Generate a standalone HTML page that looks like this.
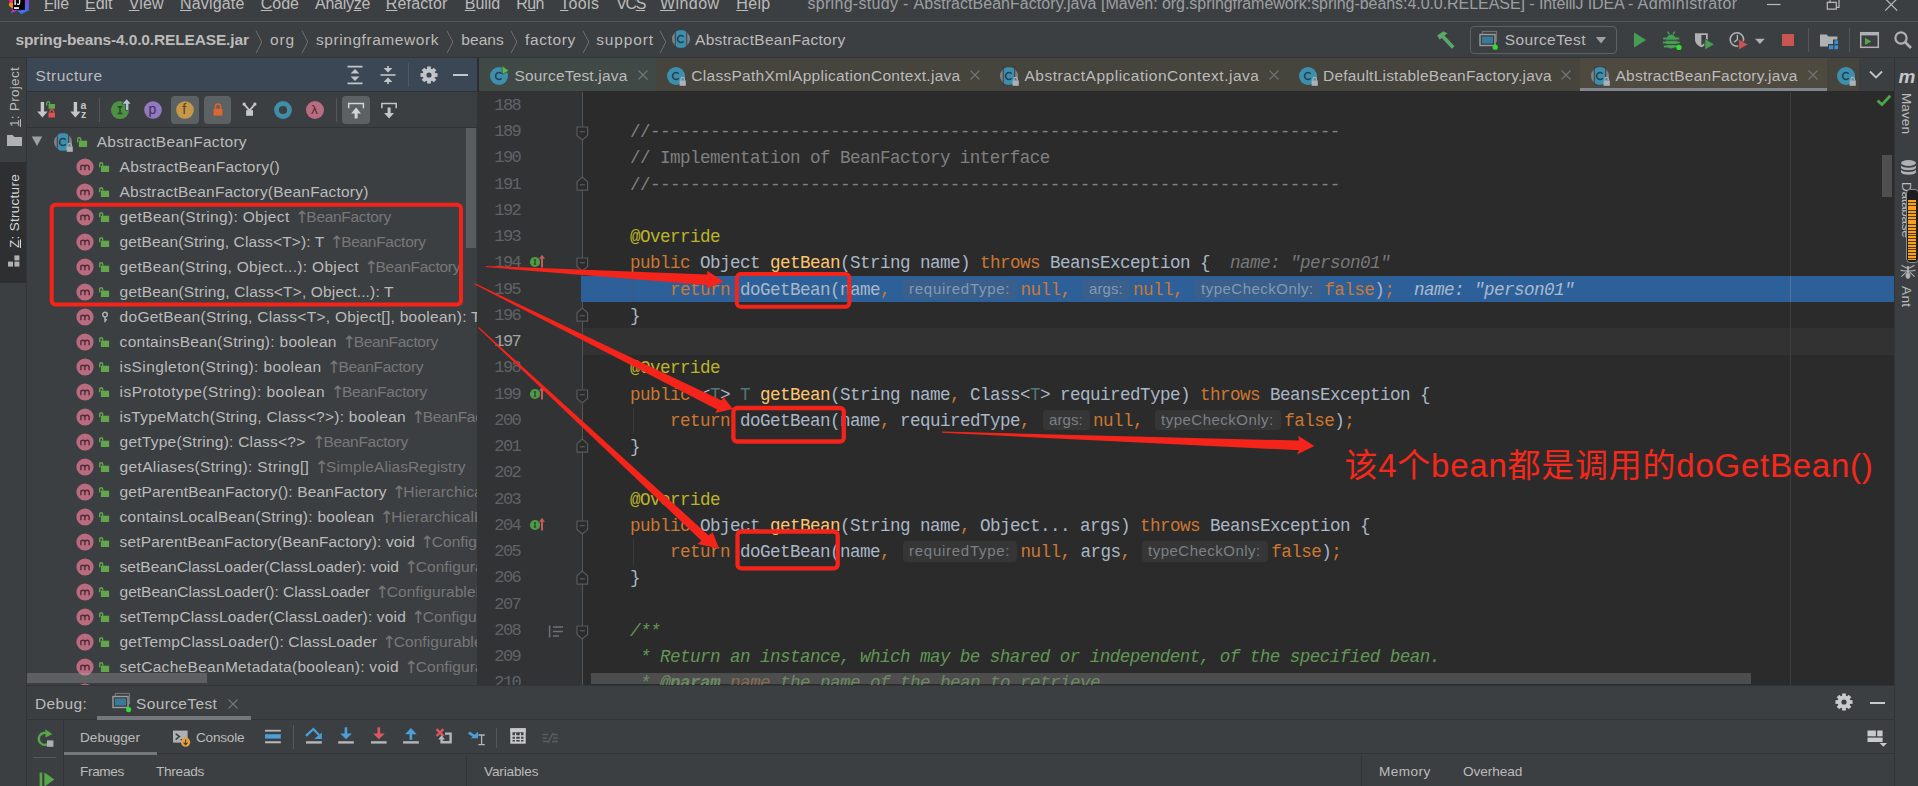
<!DOCTYPE html>
<html lang="zh"><head><meta charset="utf-8"><title>IntelliJ IDEA - AbstractBeanFactory.java</title>
<style>
html,body{margin:0;padding:0}
body{width:1918px;height:786px;overflow:hidden;background:#3c3f41;position:relative;font-family:"Liberation Sans","Noto Sans CJK SC",sans-serif;}
body div,body span,body svg{position:absolute;display:block}
span{white-space:pre}
svg{overflow:visible}
u{text-decoration:underline}
.ar{position:relative!important;top:1.4px;display:inline!important;font-family:"DejaVu Sans",sans-serif;font-size:17px;letter-spacing:-2.6px;line-height:10px}
.m{font-family:"Liberation Mono",monospace}
</style></head>
<body>
<div style="left:0px;top:21px;width:1918px;height:1px;background:#515658;"></div>
<svg style="left:8px;top:0px;" width="22" height="15" viewBox="0 0 22 15"><defs><linearGradient id="lgb" x1="0" y1="0" x2="0" y2="1"><stop offset="0" stop-color="#8546d8"/><stop offset="1" stop-color="#2f7cf0"/></linearGradient></defs><path d="M1.2 0 H5.2 V2.8 H1.6Z" fill="#fb2d7b"/><path d="M1.4 2.8 H5.2 V8.2 L3.6 8 L0.8 5.6Z" fill="#fb8617"/><path d="M4.6 8 L5.2 9.6 L9.6 10.6 L2.8 13.2Z" fill="#b436c9"/><path d="M16.6 0 H21 L20.8 10.4 L13.4 14 L9 10.8 L16.8 9.8Z" fill="url(#lgb)"/><rect x="5" y="0" width="11.8" height="9.8" fill="#000"/><rect x="6" y="7.2" width="4.9" height="1.7" fill="#fff"/><path d="M7.1 0 V4.6 M6.2 4.1 H8 M11.6 0 V3 C11.6 4.8 9.6 4.8 9.2 3.6" stroke="#fff" stroke-width="1.3" fill="none"/></svg>
<span id="t1" style="left:44px;top:-7.64px;font-size:16px;line-height:24px;color:#bbbbbb;letter-spacing:-0.249px;text-underline-offset:0.6px;text-decoration-thickness:1px;"><u>F</u>ile</span>
<span id="t2" style="left:85px;top:-7.64px;font-size:16px;line-height:24px;color:#bbbbbb;letter-spacing:-0.020px;text-underline-offset:0.6px;text-decoration-thickness:1px;"><u>E</u>dit</span>
<span id="t3" style="left:128.8px;top:-7.64px;font-size:16px;line-height:24px;color:#bbbbbb;letter-spacing:0.148px;text-underline-offset:0.6px;text-decoration-thickness:1px;"><u>V</u>iew</span>
<span id="t4" style="left:180px;top:-7.64px;font-size:16px;line-height:24px;color:#bbbbbb;letter-spacing:0.168px;text-underline-offset:0.6px;text-decoration-thickness:1px;"><u>N</u>avigate</span>
<span id="t5" style="left:260.8px;top:-7.64px;font-size:16px;line-height:24px;color:#bbbbbb;letter-spacing:-0.016px;text-underline-offset:0.6px;text-decoration-thickness:1px;"><u>C</u>ode</span>
<span id="t6" style="left:315px;top:-7.64px;font-size:16px;line-height:24px;color:#bbbbbb;letter-spacing:-0.277px;text-underline-offset:0.6px;text-decoration-thickness:1px;">Analy<u>z</u>e</span>
<span id="t7" style="left:385.8px;top:-7.64px;font-size:16px;line-height:24px;color:#bbbbbb;letter-spacing:0.152px;text-underline-offset:0.6px;text-decoration-thickness:1px;"><u>R</u>efactor</span>
<span id="t8" style="left:464.8px;top:-7.64px;font-size:16px;line-height:24px;color:#bbbbbb;letter-spacing:-0.076px;text-underline-offset:0.6px;text-decoration-thickness:1px;"><u>B</u>uild</span>
<span id="t9" style="left:516.3px;top:-7.64px;font-size:16px;line-height:24px;color:#bbbbbb;letter-spacing:-0.625px;text-underline-offset:0.6px;text-decoration-thickness:1px;">R<u>u</u>n</span>
<span id="t10" style="left:560px;top:-7.64px;font-size:16px;line-height:24px;color:#bbbbbb;letter-spacing:0.388px;text-underline-offset:0.6px;text-decoration-thickness:1px;"><u>T</u>ools</span>
<span id="t11" style="left:616.3px;top:-7.64px;font-size:16px;line-height:24px;color:#bbbbbb;letter-spacing:-1.402px;text-underline-offset:0.6px;text-decoration-thickness:1px;">VC<u>S</u></span>
<span id="t12" style="left:660px;top:-7.64px;font-size:16px;line-height:24px;color:#bbbbbb;letter-spacing:0.430px;text-underline-offset:0.6px;text-decoration-thickness:1px;"><u>W</u>indow</span>
<span id="t13" style="left:736.3px;top:-7.64px;font-size:16px;line-height:24px;color:#bbbbbb;letter-spacing:0.320px;text-underline-offset:0.6px;text-decoration-thickness:1px;"><u>H</u>elp</span>
<span id="t14" style="left:807.4px;top:-7.74px;font-size:16px;line-height:24px;color:#9c9fa1;letter-spacing:0.315px;">spring-study - </span>
<span id="t15" style="left:913.5px;top:-7.74px;font-size:16px;line-height:24px;color:#9c9fa1;letter-spacing:0.042px;">AbstractBeanFactory.java </span>
<span id="t16" style="left:1101px;top:-7.74px;font-size:16px;line-height:24px;color:#9c9fa1;letter-spacing:-0.045px;">[Maven: </span>
<span id="t17" style="left:1162px;top:-7.74px;font-size:16px;line-height:24px;color:#9c9fa1;letter-spacing:-0.055px;">org.springframework:spring-beans:4.0.0.RELEASE] - </span>
<span id="t18" style="left:1539px;top:-7.74px;font-size:16px;line-height:24px;color:#9c9fa1;letter-spacing:-0.118px;">IntelliJ IDEA - </span>
<span id="t19" style="left:1637.6px;top:-7.74px;font-size:16px;line-height:24px;color:#9c9fa1;letter-spacing:0.442px;">Administrator</span>
<svg style="left:1764px;top:0px;" width="140" height="14" viewBox="0 0 140 14"><path d="M3 4.5 H16.5" stroke="#b8babc" stroke-width="1.2"/><path d="M63.3 2.4 H72.3 V9.2 H63.3Z M66 2.4 V-2 H75 V7.4 H72.3" stroke="#b8babc" stroke-width="1.2" fill="none"/><path d="M121.2 -1.4 L133.2 10.6 M133.2 -1.4 L121.2 10.6" stroke="#b8babc" stroke-width="1.2" fill="none"/></svg>
<div style="left:0px;top:57px;width:1918px;height:1px;background:#323537;"></div>
<span id="t20" style="left:15.5px;top:27.73px;font-size:15.5px;line-height:23px;color:#bbbbbb;font-weight:bold;letter-spacing:-0.148px;">spring-beans-4.0.0.RELEASE.jar</span>
<svg style="left:254.5px;top:29.5px;" width="8" height="24" viewBox="0 0 8 24"><path d="M1 0.8 L6.8 12 L1 23.2" fill="none" stroke="#6d7073" stroke-width="1"/></svg>
<span id="t21" style="left:270px;top:27.73px;font-size:15.5px;line-height:23px;color:#bbbbbb;letter-spacing:0.865px;">org</span>
<svg style="left:300.5px;top:29.5px;" width="8" height="24" viewBox="0 0 8 24"><path d="M1 0.8 L6.8 12 L1 23.2" fill="none" stroke="#6d7073" stroke-width="1"/></svg>
<span id="t22" style="left:316px;top:27.73px;font-size:15.5px;line-height:23px;color:#bbbbbb;letter-spacing:0.562px;">springframework</span>
<svg style="left:445.5px;top:29.5px;" width="8" height="24" viewBox="0 0 8 24"><path d="M1 0.8 L6.8 12 L1 23.2" fill="none" stroke="#6d7073" stroke-width="1"/></svg>
<span id="t23" style="left:461.3px;top:27.73px;font-size:15.5px;line-height:23px;color:#bbbbbb;letter-spacing:0.053px;">beans</span>
<svg style="left:509.5px;top:29.5px;" width="8" height="24" viewBox="0 0 8 24"><path d="M1 0.8 L6.8 12 L1 23.2" fill="none" stroke="#6d7073" stroke-width="1"/></svg>
<span id="t24" style="left:525px;top:27.73px;font-size:15.5px;line-height:23px;color:#bbbbbb;letter-spacing:0.612px;">factory</span>
<svg style="left:581.5px;top:29.5px;" width="8" height="24" viewBox="0 0 8 24"><path d="M1 0.8 L6.8 12 L1 23.2" fill="none" stroke="#6d7073" stroke-width="1"/></svg>
<span id="t25" style="left:596.3px;top:27.73px;font-size:15.5px;line-height:23px;color:#bbbbbb;letter-spacing:0.828px;">support</span>
<svg style="left:658.5px;top:29.5px;" width="8" height="24" viewBox="0 0 8 24"><path d="M1 0.8 L6.8 12 L1 23.2" fill="none" stroke="#6d7073" stroke-width="1"/></svg>
<svg style="left:669px;top:27.4px;" width="24" height="24" viewBox="0 0 24 24"><circle cx="12" cy="12" r="9" fill="#879199" opacity="0.85"/><rect x="5.7" y="2.5" width="12.6" height="19" fill="#3c3f41" opacity="0.8"/><path d="M7 4.6 C8.7 2.7 15.3 2.7 17 4.6 V19.4 C15.3 21.3 8.7 21.3 7 19.4Z" fill="#3e8fae"/><path d="M14.7 9.7 A3.5 3.5 0 1 0 14.7 14.3" fill="none" stroke="#22414f" stroke-width="1.6"/></svg>
<span id="t26" style="left:695px;top:27.73px;font-size:15.5px;line-height:23px;color:#bbbbbb;letter-spacing:0.303px;">AbstractBeanFactory</span>
<svg style="left:1434px;top:29px;" width="24" height="22" viewBox="0 0 24 22"><path d="M3.2 6.6 L9.4 2.2 L13.6 4.6 L10.4 6.4 L20.6 17.2 L17.8 19.8 L7.8 9 L5.6 10.6Z" fill="#59a869"/></svg>
<div style="left:1470px;top:26px;width:145px;height:26px;border:1px solid #5e6163;border-radius:4px;box-sizing:content-box"></div>
<svg style="left:1478px;top:30px;" width="22" height="20" viewBox="0 0 22 20"><rect x="4.5" y="1.5" width="14" height="10" fill="none" stroke="#6e7275" stroke-width="1.2"/><rect x="2" y="4.5" width="15" height="11" fill="#3c3f41" stroke="#9a9da0" stroke-width="1.4"/><rect x="4" y="6.5" width="11" height="7" fill="#3a7a99"/><circle cx="17.2" cy="17.2" r="2.6" fill="#2de02d"/></svg>
<span id="t27" style="left:1504.8px;top:28.43px;font-size:15.5px;line-height:23px;color:#bbbbbb;letter-spacing:0.345px;">SourceTest</span>
<svg style="left:1595px;top:36px;" width="12" height="8" viewBox="0 0 12 8"><path d="M0.8 1 H11.2 L6 7.4Z" fill="#9da0a2"/></svg>
<svg style="left:1632px;top:32px;" width="16" height="17" viewBox="0 0 16 17"><path d="M2 0.6 L14.2 8 L2 15.4Z" fill="#499c54"/></svg>
<svg style="left:1661px;top:30px;" width="22" height="20" viewBox="0 0 22 20"><ellipse cx="10.2" cy="11.6" rx="5.5" ry="7" fill="#499c54"/><path d="M6.6 1.6 L8.4 4.4 M13.8 1.6 L12 4.4" stroke="#499c54" stroke-width="1.5" fill="none"/><path d="M2.2 8.4 H18.2 M1.8 12.4 H18.6 M2.8 16.6 H17.6" stroke="#499c54" stroke-width="2" fill="none"/><path d="M5 10.3 H15.4 M5 14.5 H15.4" stroke="#3c3f41" stroke-width="1.1"/><circle cx="18" cy="17.4" r="2.6" fill="#2de02d"/></svg>
<svg style="left:1693px;top:30px;" width="23" height="20" viewBox="0 0 23 20"><path d="M2 3.2 H14.8 V9.6 C14.8 13.6 11.4 16.2 8.4 17.2 C5.4 16.2 2 13.6 2 9.6Z" fill="#afb1b3"/><path d="M8.4 5 H13 V9.6 C13 12.4 10.6 14.4 8.4 15.3Z" fill="#3c3f41"/><path d="M11.8 8.6 L21.6 14.3 L11.8 20Z" fill="#499c54" stroke="#3c3f41" stroke-width="0.9"/></svg>
<svg style="left:1728px;top:30px;" width="38" height="20" viewBox="0 0 38 20"><circle cx="8.9" cy="9.5" r="6.7" fill="none" stroke="#afb1b3" stroke-width="1.6"/><path d="M9.4 4.8 V9.6 L6 12.2" stroke="#afb1b3" stroke-width="1.4" fill="none"/><path d="M10.6 9 L20.4 14.5 L10.6 20Z" fill="#c95452" stroke="#3c3f41" stroke-width="0.9"/><path d="M27 8.8 H36.8 L31.9 14Z" fill="#afb1b3"/></svg>
<div style="left:1781.9px;top:34.1px;width:12.2px;height:12.3px;background:#c95452;"></div>
<div style="left:1808px;top:28px;width:1px;height:24px;background:#555759;"></div>
<svg style="left:1818px;top:29px;" width="22" height="22" viewBox="0 0 22 22"><path d="M2 5.4 H8.6 L10.6 7.6 H19.4 V10.4 H15 V15 H10 V17.4 H2Z" fill="#afb1b3"/><rect x="16.4" y="11.4" width="3.7" height="3.7" fill="#3a8fd0"/><rect x="11" y="16.3" width="4.2" height="3.9" fill="#3a8fd0"/><rect x="16.4" y="16.3" width="3.7" height="3.9" fill="#3a8fd0"/></svg>
<div style="left:1849px;top:28px;width:1px;height:24px;background:#555759;"></div>
<svg style="left:1859px;top:30px;" width="22" height="20" viewBox="0 0 22 20"><rect x="1.7" y="2.7" width="17.6" height="14.6" fill="none" stroke="#afb1b3" stroke-width="1.5"/><rect x="1" y="2" width="19" height="3.4" fill="#afb1b3"/><path d="M6 7.8 L12.4 11.4 L6 15Z" fill="#57a64a"/></svg>
<svg style="left:1893px;top:30px;" width="20" height="20" viewBox="0 0 20 20"><circle cx="8" cy="8" r="5.6" fill="none" stroke="#afb1b3" stroke-width="2.2"/><path d="M12 12 L18 18" stroke="#afb1b3" stroke-width="2.6"/></svg>
<div style="left:26px;top:58px;width:1px;height:728px;background:#323537;"></div>
<div style="left:0px;top:162px;width:26px;height:121px;background:#2d2f31;"></div>
<span id="t28" style="left:5px;top:127px;transform-origin:0 0;transform:rotate(-90deg);font-size:13.5px;line-height:20px;color:#bbbbbb;letter-spacing:0.295px;"><u>1</u>: Project</span>
<svg style="left:6px;top:134px;" width="17" height="13" viewBox="0 0 17 13"><path d="M1 1 H6.6 L8.4 3 H16 V12 H1Z" fill="#afb1b3"/></svg>
<span id="t29" style="left:5px;top:248px;transform-origin:0 0;transform:rotate(-90deg);font-size:13.5px;line-height:20px;color:#d5d7d9;letter-spacing:0.289px;"><u>Z</u>: Structure</span>
<svg style="left:7px;top:254px;" width="15" height="13" viewBox="0 0 15 13"><rect x="1" y="7.6" width="5" height="5" fill="#afb1b3"/><rect x="7.4" y="7.6" width="5" height="5" fill="#afb1b3"/><rect x="7.4" y="1.4" width="5" height="5" fill="#afb1b3"/></svg>
<div style="left:27px;top:58px;width:450px;height:34px;background:#3b4754;"></div>
<span id="t30" style="left:35.5px;top:64.13px;font-size:15.5px;line-height:23px;color:#bbbbbb;letter-spacing:0.457px;">Structure</span>
<svg style="left:346px;top:65px;" width="18" height="20" viewBox="0 0 18 20"><path d="M1.5 1.6 H16.5 M1.5 18.4 H16.5" stroke="#c3c6c8" stroke-width="1.6"/><path d="M9 4 L13.4 8.4 H4.6Z M9 16 L13.4 11.6 H4.6Z" fill="#c3c6c8"/></svg>
<svg style="left:379px;top:65px;" width="18" height="20" viewBox="0 0 18 20"><path d="M1.5 10 H16.5" stroke="#c3c6c8" stroke-width="1.6"/><path d="M9 7.6 L13.4 3 H4.6Z M9 12.4 L13.4 17 H4.6Z" fill="#c3c6c8"/><path d="M9 1 V4 M9 16 V19" stroke="#c3c6c8" stroke-width="1.6"/></svg>
<div style="left:408px;top:63px;width:1px;height:24px;background:#4d5966;"></div>
<svg style="left:418.5px;top:64.5px;" width="20" height="20" viewBox="0 0 20 20"><g transform="translate(10,10)"><rect x="-1.9" y="-8.5" width="3.8" height="4" fill="#c3c6c8" transform="rotate(0)"/><rect x="-1.9" y="-8.5" width="3.8" height="4" fill="#c3c6c8" transform="rotate(45)"/><rect x="-1.9" y="-8.5" width="3.8" height="4" fill="#c3c6c8" transform="rotate(90)"/><rect x="-1.9" y="-8.5" width="3.8" height="4" fill="#c3c6c8" transform="rotate(135)"/><rect x="-1.9" y="-8.5" width="3.8" height="4" fill="#c3c6c8" transform="rotate(180)"/><rect x="-1.9" y="-8.5" width="3.8" height="4" fill="#c3c6c8" transform="rotate(225)"/><rect x="-1.9" y="-8.5" width="3.8" height="4" fill="#c3c6c8" transform="rotate(270)"/><rect x="-1.9" y="-8.5" width="3.8" height="4" fill="#c3c6c8" transform="rotate(315)"/><circle r="4.5" fill="none" stroke="#c3c6c8" stroke-width="3.8"/></g></svg>
<div style="left:453px;top:74px;width:15px;height:2px;background:#c3c6c8;"></div>
<div style="left:27px;top:91px;width:450px;height:1px;background:#2f3234;"></div>
<div style="left:27px;top:127px;width:450px;height:1px;background:#2f3234;"></div>
<svg style="left:36px;top:100px;" width="21" height="20" viewBox="0 0 21 20"><path d="M4.7 2 H8.1 V11.6 H11.6 L6.4 17.5 L1.2 11.6 H4.7Z" fill="#c4c6c8"/><rect x="12.5" y="4" width="6.5" height="4.7" fill="#5fa84a"/><path d="M10.7 5.4 V3.2 A1.5 1.5 0 0 1 13.7 3.2 V4" stroke="#5fa84a" stroke-width="1.3" fill="none"/><rect x="12.5" y="12.6" width="6.5" height="4.9" fill="#e0504f"/><path d="M14 12.6 V11.4 A1.75 1.75 0 0 1 17.5 11.4 V12.6" stroke="#e0504f" stroke-width="1.3" fill="none"/></svg>
<svg style="left:69px;top:100px;" width="20" height="20" viewBox="0 0 20 20"><path d="M4.7 2 H8.1 V11.6 H11.6 L6.4 17.5 L1.2 11.6 H4.7Z" fill="#c4c6c8"/></svg>
<span id="t31" style="left:80.6px;top:96.66px;font-size:10.5px;line-height:16px;color:#c4c6c8;font-weight:bold;">a</span>
<span id="t32" style="left:80.9px;top:105.86px;font-size:10.5px;line-height:16px;color:#c4c6c8;font-weight:bold;">z</span>
<div style="left:99px;top:98px;width:1px;height:24px;background:#555759;"></div>
<svg style="left:109px;top:99px;" width="23" height="22" viewBox="0 0 23 22"><circle cx="11" cy="11" r="9.1" fill="#4e9046"/><path d="M8.6 7.8 H13.4 M8.6 14.4 H13.4 M11 7.8 V14.4" stroke="#234a20" stroke-width="1.5" fill="none"/><path d="M15.9 4.7 H17 V11 H19.4 V4.7 H21.6 L17.6 0.2 L13.6 4.7Z" fill="#b4c6d4" stroke="#3c3f41" stroke-width="1.2" paint-order="stroke"/></svg>
<svg style="left:143px;top:100px;" width="20" height="20" viewBox="0 0 20 20"><circle cx="10" cy="10" r="8.8" fill="#9479c0"/></svg>
<span id="t33" style="left:148.6px;top:99.15px;font-size:14px;line-height:21px;color:#3f2f5a;">p</span>
<div style="left:170.7px;top:96px;width:28px;height:27.5px;background:#5c6164;border-radius:4px"></div>
<svg style="left:174.5px;top:100px;" width="20" height="20" viewBox="0 0 20 20"><circle cx="10" cy="10" r="8.8" fill="#c6984a"/></svg>
<span id="t34" style="left:182.3px;top:98.85px;font-size:14px;line-height:21px;color:#5a4216;">f</span>
<div style="left:203.7px;top:96px;width:27.5px;height:27.5px;background:#5c6164;border-radius:4px"></div>
<svg style="left:211px;top:102px;" width="14" height="15" viewBox="0 0 14 15"><rect x="2.6" y="6.6" width="8.8" height="7" fill="#e0662f"/><path d="M4.4 6.6 V4.6 A2.6 2.6 0 0 1 9.6 4.6 V6.6" stroke="#e0662f" stroke-width="1.5" fill="none"/></svg>
<svg style="left:240px;top:100px;" width="20" height="20" viewBox="0 0 20 20"><path d="M4.1 4.1 L9.5 10.6 L14.9 4.1" stroke="#c4c6c8" stroke-width="1.9" fill="none"/><rect x="2.7" y="2.7" width="2.8" height="2.8" fill="#c4c6c8"/><rect x="13.5" y="2.7" width="2.8" height="2.8" fill="#c4c6c8"/><rect x="6.1" y="10.2" width="6.9" height="5.6" fill="#c4c6c8"/></svg>
<svg style="left:273px;top:100px;" width="20" height="20" viewBox="0 0 20 20"><circle cx="10" cy="10" r="6.5" fill="none" stroke="#3e8faa" stroke-width="4.8"/></svg>
<svg style="left:304.8px;top:100px;" width="20" height="20" viewBox="0 0 20 20"><circle cx="10" cy="10" r="9" fill="#b86d80"/></svg>
<span id="t35" style="left:311px;top:99.92px;font-size:13.5px;line-height:20px;color:#4d2a35;">λ</span>
<div style="left:335.5px;top:98px;width:1px;height:24px;background:#555759;"></div>
<div style="left:342.1px;top:95.8px;width:27.9px;height:28px;background:#5c6164;border-radius:4px"></div>
<svg style="left:346px;top:100px;" width="20" height="20" viewBox="0 0 20 20"><path d="M2.7 8.3 V3.4 H17.4 V8.3" stroke="#d2d4d6" stroke-width="1.5" fill="none"/><path d="M10.1 7.6 L15 13.5 H11.6 V18.6 H8.6 V13.5 H5.1Z" fill="#d2d4d6"/></svg>
<svg style="left:379px;top:100px;" width="20" height="20" viewBox="0 0 20 20"><path d="M2.9 8.3 V3.4 H17.2 V8.3" stroke="#c4c6c8" stroke-width="1.5" fill="none"/><path d="M10.1 18.6 L15 12.9 H11.6 V7.6 H8.6 V12.9 H5.1Z" fill="#c4c6c8"/></svg>
<div style="left:27px;top:128px;width:450px;height:557px;overflow:hidden">
<svg style="left:4px;top:7px;" width="12" height="12" viewBox="0 0 12 12"><path d="M0.8 1.4 H11.2 L6 11Z" fill="#9da0a2"/></svg>
<svg style="left:23.9px;top:2px;" width="24" height="24" viewBox="0 0 24 24"><circle cx="12" cy="12" r="9" fill="#879199" opacity="0.85"/><rect x="5.7" y="2.5" width="12.6" height="19" fill="#3c3f41" opacity="0.8"/><path d="M7 4.6 C8.7 2.7 15.3 2.7 17 4.6 V19.4 C15.3 21.3 8.7 21.3 7 19.4Z" fill="#3e8fae"/><path d="M14.7 9.7 A3.5 3.5 0 1 0 14.7 14.3" fill="none" stroke="#22414f" stroke-width="1.6"/><rect x="15.6" y="16.4" width="6.2" height="5.4" fill="#aab3ba"/><path d="M17 16.4 V15 A1.7 1.7 0 0 1 20.4 15 V16.4" fill="none" stroke="#aab3ba" stroke-width="1.2"/></svg>
<svg style="left:49px;top:7px;" width="14" height="14" viewBox="0 0 14 14"><rect x="2.9" y="5.7" width="8.2" height="6.3" fill="#62a54b"/><path d="M1.7 7.3 V4.2 A1.5 1.5 0 0 1 4.7 4.2 V5.8" fill="none" stroke="#62a54b" stroke-width="1.4"/></svg>
<span id="t36" style="left:69.7px;top:2.13px;font-size:15.5px;line-height:23px;color:#bbbbbb;letter-spacing:0.288px;">AbstractBeanFactory</span>
<svg style="left:47.8px;top:28.900000000000006px;" width="20" height="20" viewBox="0 0 20 20"><circle cx="10" cy="10" r="8.6" fill="#b96c80"/><path d="M5.9 13.3 V8.2 M5.9 9.6 C6.4 7.8 9.6 7.6 9.9 9.8 V13.3 M9.9 9.8 C10.4 7.7 13.9 7.6 14.1 9.9 V13.3" fill="none" stroke="#4d2a35" stroke-width="1.35"/></svg>
<svg style="left:71.2px;top:31.900000000000006px;" width="14" height="14" viewBox="0 0 14 14"><rect x="2.9" y="5.7" width="8.2" height="6.3" fill="#62a54b"/><path d="M1.7 7.3 V4.2 A1.5 1.5 0 0 1 4.7 4.2 V5.8" fill="none" stroke="#62a54b" stroke-width="1.4"/></svg>
<span id="t37" style="left:92.6px;top:27.03px;font-size:15.5px;line-height:23px;color:#bbbbbb;letter-spacing:0.254px;">AbstractBeanFactory()</span>
<svg style="left:47.8px;top:53.900000000000006px;" width="20" height="20" viewBox="0 0 20 20"><circle cx="10" cy="10" r="8.6" fill="#b96c80"/><path d="M5.9 13.3 V8.2 M5.9 9.6 C6.4 7.8 9.6 7.6 9.9 9.8 V13.3 M9.9 9.8 C10.4 7.7 13.9 7.6 14.1 9.9 V13.3" fill="none" stroke="#4d2a35" stroke-width="1.35"/></svg>
<svg style="left:71.2px;top:56.900000000000006px;" width="14" height="14" viewBox="0 0 14 14"><rect x="2.9" y="5.7" width="8.2" height="6.3" fill="#62a54b"/><path d="M1.7 7.3 V4.2 A1.5 1.5 0 0 1 4.7 4.2 V5.8" fill="none" stroke="#62a54b" stroke-width="1.4"/></svg>
<span id="t38" style="left:92.6px;top:52.03px;font-size:15.5px;line-height:23px;color:#bbbbbb;letter-spacing:0.186px;">AbstractBeanFactory(BeanFactory)</span>
<svg style="left:47.8px;top:78.9px;" width="20" height="20" viewBox="0 0 20 20"><circle cx="10" cy="10" r="8.6" fill="#b96c80"/><path d="M5.9 13.3 V8.2 M5.9 9.6 C6.4 7.8 9.6 7.6 9.9 9.8 V13.3 M9.9 9.8 C10.4 7.7 13.9 7.6 14.1 9.9 V13.3" fill="none" stroke="#4d2a35" stroke-width="1.35"/></svg>
<svg style="left:71.2px;top:81.9px;" width="14" height="14" viewBox="0 0 14 14"><rect x="2.9" y="5.7" width="8.2" height="6.3" fill="#62a54b"/><path d="M1.7 7.3 V4.2 A1.5 1.5 0 0 1 4.7 4.2 V5.8" fill="none" stroke="#62a54b" stroke-width="1.4"/></svg>
<span id="t39" style="left:92.6px;top:77.03px;font-size:15.5px;line-height:23px;color:#bbbbbb;letter-spacing:0.349px;">getBean(String): Object</span>
<span id="t40" style="left:267.7px;top:77.03px;font-size:15.5px;line-height:23px;color:#787878;letter-spacing:-0.304px;"><span class="ar">↑</span>BeanFactory</span>
<svg style="left:47.8px;top:103.9px;" width="20" height="20" viewBox="0 0 20 20"><circle cx="10" cy="10" r="8.6" fill="#b96c80"/><path d="M5.9 13.3 V8.2 M5.9 9.6 C6.4 7.8 9.6 7.6 9.9 9.8 V13.3 M9.9 9.8 C10.4 7.7 13.9 7.6 14.1 9.9 V13.3" fill="none" stroke="#4d2a35" stroke-width="1.35"/></svg>
<svg style="left:71.2px;top:106.9px;" width="14" height="14" viewBox="0 0 14 14"><rect x="2.9" y="5.7" width="8.2" height="6.3" fill="#62a54b"/><path d="M1.7 7.3 V4.2 A1.5 1.5 0 0 1 4.7 4.2 V5.8" fill="none" stroke="#62a54b" stroke-width="1.4"/></svg>
<span id="t41" style="left:92.6px;top:102.03px;font-size:15.5px;line-height:23px;color:#bbbbbb;letter-spacing:0.125px;">getBean(String, Class&lt;T&gt;): T</span>
<span id="t42" style="left:302.5px;top:102.03px;font-size:15.5px;line-height:23px;color:#787878;letter-spacing:-0.296px;"><span class="ar">↑</span>BeanFactory</span>
<svg style="left:47.8px;top:128.89999999999998px;" width="20" height="20" viewBox="0 0 20 20"><circle cx="10" cy="10" r="8.6" fill="#b96c80"/><path d="M5.9 13.3 V8.2 M5.9 9.6 C6.4 7.8 9.6 7.6 9.9 9.8 V13.3 M9.9 9.8 C10.4 7.7 13.9 7.6 14.1 9.9 V13.3" fill="none" stroke="#4d2a35" stroke-width="1.35"/></svg>
<svg style="left:71.2px;top:131.89999999999998px;" width="14" height="14" viewBox="0 0 14 14"><rect x="2.9" y="5.7" width="8.2" height="6.3" fill="#62a54b"/><path d="M1.7 7.3 V4.2 A1.5 1.5 0 0 1 4.7 4.2 V5.8" fill="none" stroke="#62a54b" stroke-width="1.4"/></svg>
<span id="t43" style="left:92.6px;top:127.03px;font-size:15.5px;line-height:23px;color:#bbbbbb;letter-spacing:0.320px;">getBean(String, Object...): Object</span>
<span id="t44" style="left:336.9px;top:127.03px;font-size:15.5px;line-height:23px;color:#787878;letter-spacing:-0.304px;"><span class="ar">↑</span>BeanFactory</span>
<svg style="left:47.8px;top:153.89999999999998px;" width="20" height="20" viewBox="0 0 20 20"><circle cx="10" cy="10" r="8.6" fill="#b96c80"/><path d="M5.9 13.3 V8.2 M5.9 9.6 C6.4 7.8 9.6 7.6 9.9 9.8 V13.3 M9.9 9.8 C10.4 7.7 13.9 7.6 14.1 9.9 V13.3" fill="none" stroke="#4d2a35" stroke-width="1.35"/></svg>
<svg style="left:71.2px;top:156.89999999999998px;" width="14" height="14" viewBox="0 0 14 14"><rect x="2.9" y="5.7" width="8.2" height="6.3" fill="#62a54b"/><path d="M1.7 7.3 V4.2 A1.5 1.5 0 0 1 4.7 4.2 V5.8" fill="none" stroke="#62a54b" stroke-width="1.4"/></svg>
<span id="t45" style="left:92.6px;top:152.03px;font-size:15.5px;line-height:23px;color:#bbbbbb;letter-spacing:0.166px;">getBean(String, Class&lt;T&gt;, Object...): T</span>
<svg style="left:47.8px;top:178.89999999999998px;" width="20" height="20" viewBox="0 0 20 20"><circle cx="10" cy="10" r="8.6" fill="#b96c80"/><path d="M5.9 13.3 V8.2 M5.9 9.6 C6.4 7.8 9.6 7.6 9.9 9.8 V13.3 M9.9 9.8 C10.4 7.7 13.9 7.6 14.1 9.9 V13.3" fill="none" stroke="#4d2a35" stroke-width="1.35"/></svg>
<svg style="left:70.5px;top:181.89999999999998px;" width="14" height="14" viewBox="0 0 14 14"><circle cx="7" cy="4.6" r="2.3" fill="none" stroke="#afb1b3" stroke-width="1.5"/><path d="M7 6.9 V12.2 M7 9.8 H9 " fill="none" stroke="#afb1b3" stroke-width="1.5"/></svg>
<span id="t46" style="left:92.6px;top:177.03px;font-size:15.5px;line-height:23px;color:#bbbbbb;letter-spacing:0.274px;">doGetBean(String, Class&lt;T&gt;, Object[], boolean): T</span>
<svg style="left:47.8px;top:203.89999999999998px;" width="20" height="20" viewBox="0 0 20 20"><circle cx="10" cy="10" r="8.6" fill="#b96c80"/><path d="M5.9 13.3 V8.2 M5.9 9.6 C6.4 7.8 9.6 7.6 9.9 9.8 V13.3 M9.9 9.8 C10.4 7.7 13.9 7.6 14.1 9.9 V13.3" fill="none" stroke="#4d2a35" stroke-width="1.35"/></svg>
<svg style="left:71.2px;top:206.89999999999998px;" width="14" height="14" viewBox="0 0 14 14"><rect x="2.9" y="5.7" width="8.2" height="6.3" fill="#62a54b"/><path d="M1.7 7.3 V4.2 A1.5 1.5 0 0 1 4.7 4.2 V5.8" fill="none" stroke="#62a54b" stroke-width="1.4"/></svg>
<span id="t47" style="left:92.6px;top:202.03px;font-size:15.5px;line-height:23px;color:#bbbbbb;letter-spacing:0.299px;">containsBean(String): boolean</span>
<span id="t48" style="left:315px;top:202.03px;font-size:15.5px;line-height:23px;color:#787878;letter-spacing:-0.329px;"><span class="ar">↑</span>BeanFactory</span>
<svg style="left:47.8px;top:228.89999999999998px;" width="20" height="20" viewBox="0 0 20 20"><circle cx="10" cy="10" r="8.6" fill="#b96c80"/><path d="M5.9 13.3 V8.2 M5.9 9.6 C6.4 7.8 9.6 7.6 9.9 9.8 V13.3 M9.9 9.8 C10.4 7.7 13.9 7.6 14.1 9.9 V13.3" fill="none" stroke="#4d2a35" stroke-width="1.35"/></svg>
<svg style="left:71.2px;top:231.89999999999998px;" width="14" height="14" viewBox="0 0 14 14"><rect x="2.9" y="5.7" width="8.2" height="6.3" fill="#62a54b"/><path d="M1.7 7.3 V4.2 A1.5 1.5 0 0 1 4.7 4.2 V5.8" fill="none" stroke="#62a54b" stroke-width="1.4"/></svg>
<span id="t49" style="left:92.6px;top:227.03px;font-size:15.5px;line-height:23px;color:#bbbbbb;letter-spacing:0.410px;">isSingleton(String): boolean</span>
<span id="t50" style="left:299.8px;top:227.03px;font-size:15.5px;line-height:23px;color:#787878;letter-spacing:-0.279px;"><span class="ar">↑</span>BeanFactory</span>
<svg style="left:47.8px;top:253.89999999999998px;" width="20" height="20" viewBox="0 0 20 20"><circle cx="10" cy="10" r="8.6" fill="#b96c80"/><path d="M5.9 13.3 V8.2 M5.9 9.6 C6.4 7.8 9.6 7.6 9.9 9.8 V13.3 M9.9 9.8 C10.4 7.7 13.9 7.6 14.1 9.9 V13.3" fill="none" stroke="#4d2a35" stroke-width="1.35"/></svg>
<svg style="left:71.2px;top:256.9px;" width="14" height="14" viewBox="0 0 14 14"><rect x="2.9" y="5.7" width="8.2" height="6.3" fill="#62a54b"/><path d="M1.7 7.3 V4.2 A1.5 1.5 0 0 1 4.7 4.2 V5.8" fill="none" stroke="#62a54b" stroke-width="1.4"/></svg>
<span id="t51" style="left:92.6px;top:252.03px;font-size:15.5px;line-height:23px;color:#bbbbbb;letter-spacing:0.474px;">isPrototype(String): boolean</span>
<span id="t52" style="left:303.4px;top:252.03px;font-size:15.5px;line-height:23px;color:#787878;letter-spacing:-0.279px;"><span class="ar">↑</span>BeanFactory</span>
<svg style="left:47.8px;top:278.9px;" width="20" height="20" viewBox="0 0 20 20"><circle cx="10" cy="10" r="8.6" fill="#b96c80"/><path d="M5.9 13.3 V8.2 M5.9 9.6 C6.4 7.8 9.6 7.6 9.9 9.8 V13.3 M9.9 9.8 C10.4 7.7 13.9 7.6 14.1 9.9 V13.3" fill="none" stroke="#4d2a35" stroke-width="1.35"/></svg>
<svg style="left:71.2px;top:281.9px;" width="14" height="14" viewBox="0 0 14 14"><rect x="2.9" y="5.7" width="8.2" height="6.3" fill="#62a54b"/><path d="M1.7 7.3 V4.2 A1.5 1.5 0 0 1 4.7 4.2 V5.8" fill="none" stroke="#62a54b" stroke-width="1.4"/></svg>
<span id="t53" style="left:92.6px;top:277.03px;font-size:15.5px;line-height:23px;color:#bbbbbb;letter-spacing:0.281px;">isTypeMatch(String, Class&lt;?&gt;): boolean</span>
<span id="t54" style="left:384px;top:277.03px;font-size:15.5px;line-height:23px;color:#787878;letter-spacing:-0.296px;"><span class="ar">↑</span>BeanFactory</span>
<svg style="left:47.8px;top:303.9px;" width="20" height="20" viewBox="0 0 20 20"><circle cx="10" cy="10" r="8.6" fill="#b96c80"/><path d="M5.9 13.3 V8.2 M5.9 9.6 C6.4 7.8 9.6 7.6 9.9 9.8 V13.3 M9.9 9.8 C10.4 7.7 13.9 7.6 14.1 9.9 V13.3" fill="none" stroke="#4d2a35" stroke-width="1.35"/></svg>
<svg style="left:71.2px;top:306.9px;" width="14" height="14" viewBox="0 0 14 14"><rect x="2.9" y="5.7" width="8.2" height="6.3" fill="#62a54b"/><path d="M1.7 7.3 V4.2 A1.5 1.5 0 0 1 4.7 4.2 V5.8" fill="none" stroke="#62a54b" stroke-width="1.4"/></svg>
<span id="t55" style="left:92.6px;top:302.03px;font-size:15.5px;line-height:23px;color:#bbbbbb;letter-spacing:0.234px;">getType(String): Class&lt;?&gt;</span>
<span id="t56" style="left:284.8px;top:302.03px;font-size:15.5px;line-height:23px;color:#787878;letter-spacing:-0.304px;"><span class="ar">↑</span>BeanFactory</span>
<svg style="left:47.8px;top:328.9px;" width="20" height="20" viewBox="0 0 20 20"><circle cx="10" cy="10" r="8.6" fill="#b96c80"/><path d="M5.9 13.3 V8.2 M5.9 9.6 C6.4 7.8 9.6 7.6 9.9 9.8 V13.3 M9.9 9.8 C10.4 7.7 13.9 7.6 14.1 9.9 V13.3" fill="none" stroke="#4d2a35" stroke-width="1.35"/></svg>
<svg style="left:71.2px;top:331.9px;" width="14" height="14" viewBox="0 0 14 14"><rect x="2.9" y="5.7" width="8.2" height="6.3" fill="#62a54b"/><path d="M1.7 7.3 V4.2 A1.5 1.5 0 0 1 4.7 4.2 V5.8" fill="none" stroke="#62a54b" stroke-width="1.4"/></svg>
<span id="t57" style="left:92.6px;top:327.03px;font-size:15.5px;line-height:23px;color:#bbbbbb;letter-spacing:0.341px;">getAliases(String): String[]</span>
<span id="t58" style="left:287.4px;top:327.03px;font-size:15.5px;line-height:23px;color:#787878;letter-spacing:0.091px;"><span class="ar">↑</span>SimpleAliasRegistry</span>
<svg style="left:47.8px;top:353.9px;" width="20" height="20" viewBox="0 0 20 20"><circle cx="10" cy="10" r="8.6" fill="#b96c80"/><path d="M5.9 13.3 V8.2 M5.9 9.6 C6.4 7.8 9.6 7.6 9.9 9.8 V13.3 M9.9 9.8 C10.4 7.7 13.9 7.6 14.1 9.9 V13.3" fill="none" stroke="#4d2a35" stroke-width="1.35"/></svg>
<svg style="left:71.2px;top:356.9px;" width="14" height="14" viewBox="0 0 14 14"><rect x="2.9" y="5.7" width="8.2" height="6.3" fill="#62a54b"/><path d="M1.7 7.3 V4.2 A1.5 1.5 0 0 1 4.7 4.2 V5.8" fill="none" stroke="#62a54b" stroke-width="1.4"/></svg>
<span id="t59" style="left:92.6px;top:352.03px;font-size:15.5px;line-height:23px;color:#bbbbbb;letter-spacing:0.148px;">getParentBeanFactory(): BeanFactory</span>
<span id="t60" style="left:364.7px;top:352.03px;font-size:15.5px;line-height:23px;color:#787878;letter-spacing:0.088px;"><span class="ar">↑</span>HierarchicalBeanFactory</span>
<svg style="left:47.8px;top:378.9px;" width="20" height="20" viewBox="0 0 20 20"><circle cx="10" cy="10" r="8.6" fill="#b96c80"/><path d="M5.9 13.3 V8.2 M5.9 9.6 C6.4 7.8 9.6 7.6 9.9 9.8 V13.3 M9.9 9.8 C10.4 7.7 13.9 7.6 14.1 9.9 V13.3" fill="none" stroke="#4d2a35" stroke-width="1.35"/></svg>
<svg style="left:71.2px;top:381.9px;" width="14" height="14" viewBox="0 0 14 14"><rect x="2.9" y="5.7" width="8.2" height="6.3" fill="#62a54b"/><path d="M1.7 7.3 V4.2 A1.5 1.5 0 0 1 4.7 4.2 V5.8" fill="none" stroke="#62a54b" stroke-width="1.4"/></svg>
<span id="t61" style="left:92.6px;top:377.03px;font-size:15.5px;line-height:23px;color:#bbbbbb;letter-spacing:0.274px;">containsLocalBean(String): boolean</span>
<span id="t62" style="left:352.5px;top:377.03px;font-size:15.5px;line-height:23px;color:#787878;letter-spacing:0.088px;"><span class="ar">↑</span>HierarchicalBeanFactory</span>
<svg style="left:47.8px;top:403.9px;" width="20" height="20" viewBox="0 0 20 20"><circle cx="10" cy="10" r="8.6" fill="#b96c80"/><path d="M5.9 13.3 V8.2 M5.9 9.6 C6.4 7.8 9.6 7.6 9.9 9.8 V13.3 M9.9 9.8 C10.4 7.7 13.9 7.6 14.1 9.9 V13.3" fill="none" stroke="#4d2a35" stroke-width="1.35"/></svg>
<svg style="left:71.2px;top:406.9px;" width="14" height="14" viewBox="0 0 14 14"><rect x="2.9" y="5.7" width="8.2" height="6.3" fill="#62a54b"/><path d="M1.7 7.3 V4.2 A1.5 1.5 0 0 1 4.7 4.2 V5.8" fill="none" stroke="#62a54b" stroke-width="1.4"/></svg>
<span id="t63" style="left:92.6px;top:402.03px;font-size:15.5px;line-height:23px;color:#bbbbbb;letter-spacing:0.152px;">setParentBeanFactory(BeanFactory): void</span>
<span id="t64" style="left:393px;top:402.03px;font-size:15.5px;line-height:23px;color:#787878;letter-spacing:0.088px;"><span class="ar">↑</span>ConfigurableBeanFactory</span>
<svg style="left:47.8px;top:428.9px;" width="20" height="20" viewBox="0 0 20 20"><circle cx="10" cy="10" r="8.6" fill="#b96c80"/><path d="M5.9 13.3 V8.2 M5.9 9.6 C6.4 7.8 9.6 7.6 9.9 9.8 V13.3 M9.9 9.8 C10.4 7.7 13.9 7.6 14.1 9.9 V13.3" fill="none" stroke="#4d2a35" stroke-width="1.35"/></svg>
<svg style="left:71.2px;top:431.9px;" width="14" height="14" viewBox="0 0 14 14"><rect x="2.9" y="5.7" width="8.2" height="6.3" fill="#62a54b"/><path d="M1.7 7.3 V4.2 A1.5 1.5 0 0 1 4.7 4.2 V5.8" fill="none" stroke="#62a54b" stroke-width="1.4"/></svg>
<span id="t65" style="left:92.6px;top:427.03px;font-size:15.5px;line-height:23px;color:#bbbbbb;letter-spacing:0.030px;">setBeanClassLoader(ClassLoader): void</span>
<span id="t66" style="left:377px;top:427.03px;font-size:15.5px;line-height:23px;color:#787878;letter-spacing:0.088px;"><span class="ar">↑</span>ConfigurableBeanFactory</span>
<svg style="left:47.8px;top:453.9px;" width="20" height="20" viewBox="0 0 20 20"><circle cx="10" cy="10" r="8.6" fill="#b96c80"/><path d="M5.9 13.3 V8.2 M5.9 9.6 C6.4 7.8 9.6 7.6 9.9 9.8 V13.3 M9.9 9.8 C10.4 7.7 13.9 7.6 14.1 9.9 V13.3" fill="none" stroke="#4d2a35" stroke-width="1.35"/></svg>
<svg style="left:71.2px;top:456.9px;" width="14" height="14" viewBox="0 0 14 14"><rect x="2.9" y="5.7" width="8.2" height="6.3" fill="#62a54b"/><path d="M1.7 7.3 V4.2 A1.5 1.5 0 0 1 4.7 4.2 V5.8" fill="none" stroke="#62a54b" stroke-width="1.4"/></svg>
<span id="t67" style="left:92.6px;top:452.03px;font-size:15.5px;line-height:23px;color:#bbbbbb;letter-spacing:-0.010px;">getBeanClassLoader(): ClassLoader</span>
<span id="t68" style="left:348px;top:452.03px;font-size:15.5px;line-height:23px;color:#787878;letter-spacing:0.088px;"><span class="ar">↑</span>ConfigurableBeanFactory</span>
<svg style="left:47.8px;top:478.9px;" width="20" height="20" viewBox="0 0 20 20"><circle cx="10" cy="10" r="8.6" fill="#b96c80"/><path d="M5.9 13.3 V8.2 M5.9 9.6 C6.4 7.8 9.6 7.6 9.9 9.8 V13.3 M9.9 9.8 C10.4 7.7 13.9 7.6 14.1 9.9 V13.3" fill="none" stroke="#4d2a35" stroke-width="1.35"/></svg>
<svg style="left:71.2px;top:481.9px;" width="14" height="14" viewBox="0 0 14 14"><rect x="2.9" y="5.7" width="8.2" height="6.3" fill="#62a54b"/><path d="M1.7 7.3 V4.2 A1.5 1.5 0 0 1 4.7 4.2 V5.8" fill="none" stroke="#62a54b" stroke-width="1.4"/></svg>
<span id="t69" style="left:92.6px;top:477.03px;font-size:15.5px;line-height:23px;color:#bbbbbb;letter-spacing:0.173px;">setTempClassLoader(ClassLoader): void</span>
<span id="t70" style="left:384px;top:477.03px;font-size:15.5px;line-height:23px;color:#787878;letter-spacing:0.088px;"><span class="ar">↑</span>ConfigurableBeanFactory</span>
<svg style="left:47.8px;top:503.9px;" width="20" height="20" viewBox="0 0 20 20"><circle cx="10" cy="10" r="8.6" fill="#b96c80"/><path d="M5.9 13.3 V8.2 M5.9 9.6 C6.4 7.8 9.6 7.6 9.9 9.8 V13.3 M9.9 9.8 C10.4 7.7 13.9 7.6 14.1 9.9 V13.3" fill="none" stroke="#4d2a35" stroke-width="1.35"/></svg>
<svg style="left:71.2px;top:506.9px;" width="14" height="14" viewBox="0 0 14 14"><rect x="2.9" y="5.7" width="8.2" height="6.3" fill="#62a54b"/><path d="M1.7 7.3 V4.2 A1.5 1.5 0 0 1 4.7 4.2 V5.8" fill="none" stroke="#62a54b" stroke-width="1.4"/></svg>
<span id="t71" style="left:92.6px;top:502.03px;font-size:15.5px;line-height:23px;color:#bbbbbb;letter-spacing:0.150px;">getTempClassLoader(): ClassLoader</span>
<span id="t72" style="left:355px;top:502.03px;font-size:15.5px;line-height:23px;color:#787878;letter-spacing:0.088px;"><span class="ar">↑</span>ConfigurableBeanFactory</span>
<svg style="left:47.8px;top:528.9px;" width="20" height="20" viewBox="0 0 20 20"><circle cx="10" cy="10" r="8.6" fill="#b96c80"/><path d="M5.9 13.3 V8.2 M5.9 9.6 C6.4 7.8 9.6 7.6 9.9 9.8 V13.3 M9.9 9.8 C10.4 7.7 13.9 7.6 14.1 9.9 V13.3" fill="none" stroke="#4d2a35" stroke-width="1.35"/></svg>
<svg style="left:71.2px;top:531.9px;" width="14" height="14" viewBox="0 0 14 14"><rect x="2.9" y="5.7" width="8.2" height="6.3" fill="#62a54b"/><path d="M1.7 7.3 V4.2 A1.5 1.5 0 0 1 4.7 4.2 V5.8" fill="none" stroke="#62a54b" stroke-width="1.4"/></svg>
<span id="t73" style="left:92.6px;top:527.03px;font-size:15.5px;line-height:23px;color:#bbbbbb;letter-spacing:0.302px;">setCacheBeanMetadata(boolean): void</span>
<span id="t74" style="left:377px;top:527.03px;font-size:15.5px;line-height:23px;color:#787878;letter-spacing:0.088px;"><span class="ar">↑</span>ConfigurableBeanFactory</span>
<svg style="left:47.8px;top:553.9px;" width="20" height="20" viewBox="0 0 20 20"><circle cx="10" cy="10" r="8.6" fill="#b96c80"/><path d="M5.9 13.3 V8.2 M5.9 9.6 C6.4 7.8 9.6 7.6 9.9 9.8 V13.3 M9.9 9.8 C10.4 7.7 13.9 7.6 14.1 9.9 V13.3" fill="none" stroke="#4d2a35" stroke-width="1.35"/></svg>
<svg style="left:71.2px;top:556.9px;" width="14" height="14" viewBox="0 0 14 14"><rect x="2.9" y="5.7" width="8.2" height="6.3" fill="#62a54b"/><path d="M1.7 7.3 V4.2 A1.5 1.5 0 0 1 4.7 4.2 V5.8" fill="none" stroke="#62a54b" stroke-width="1.4"/></svg>
<span id="t75" style="left:92.6px;top:552.03px;font-size:15.5px;line-height:23px;color:#bbbbbb;letter-spacing:0.088px;">isCacheBeanMetadata(): boolean</span>
</div>
<div style="left:466px;top:128px;width:10px;height:120px;background:#5a5d5f;"></div>
<div style="left:27px;top:673px;width:180px;height:10px;background:rgba(190,190,190,0.26);"></div>
<div style="left:477px;top:58px;width:2px;height:34px;background:#2b2d2e;"></div>
<div style="left:477px;top:92px;width:2px;height:593px;background:#313335;"></div>
<div style="left:479px;top:58px;width:1415px;height:34px;background:#3c3f41;"></div>
<div style="left:479px;top:58px;width:177px;height:33px;background:#404946;"></div>
<div style="left:656px;top:58px;width:1203px;height:33px;background:#45443d;"></div>
<div style="left:1580px;top:58px;width:247px;height:33px;background:#4f4a3f;"></div>
<div style="left:1580px;top:88.4px;width:247px;height:3.4px;background:#82878e;"></div>
<svg style="left:486.8px;top:64px;" width="24" height="24" viewBox="0 0 24 24"><circle cx="12" cy="12" r="9.0" fill="#3e8fae"/><path d="M14.7 9.7 A3.5 3.5 0 1 0 14.7 14.3" fill="none" stroke="#22414f" stroke-width="1.6"/><path d="M14.9 1.8 L21.9 6.6 L15.5 10.4Z" fill="#5fb83f" stroke="#3e4946" stroke-width="0.7"/></svg>
<span id="t76" style="left:514.5px;top:64.13px;font-size:15.5px;line-height:23px;color:#bbbbbb;letter-spacing:0.181px;">SourceTest.java</span>
<svg style="left:637px;top:69px;" width="12" height="12" viewBox="0 0 12 12"><path d="M1.5 1.5 L10.5 10.5 M10.5 1.5 L1.5 10.5" stroke="#747779" stroke-width="1.1" fill="none"/></svg>
<svg style="left:663.5px;top:64px;" width="24" height="24" viewBox="0 0 24 24"><circle cx="12" cy="12" r="9.0" fill="#3e8fae"/><path d="M14.7 9.7 A3.5 3.5 0 1 0 14.7 14.3" fill="none" stroke="#22414f" stroke-width="1.6"/><rect x="15.6" y="16.4" width="6.2" height="5.4" fill="#aab3ba"/><path d="M17 16.4 V15 A1.7 1.7 0 0 1 20.4 15 V16.4" fill="none" stroke="#aab3ba" stroke-width="1.2"/></svg>
<span id="t77" style="left:691.3px;top:64.13px;font-size:15.5px;line-height:23px;color:#bbbbbb;letter-spacing:0.282px;">ClassPathXmlApplicationContext.java</span>
<svg style="left:969px;top:69px;" width="12" height="12" viewBox="0 0 12 12"><path d="M1.5 1.5 L10.5 10.5 M10.5 1.5 L1.5 10.5" stroke="#747779" stroke-width="1.1" fill="none"/></svg>
<svg style="left:996.8px;top:64px;" width="24" height="24" viewBox="0 0 24 24"><circle cx="12" cy="12" r="9" fill="#879199" opacity="0.85"/><rect x="5.7" y="2.5" width="12.6" height="19" fill="#3c3f41" opacity="0.8"/><path d="M7 4.6 C8.7 2.7 15.3 2.7 17 4.6 V19.4 C15.3 21.3 8.7 21.3 7 19.4Z" fill="#3e8fae"/><path d="M14.7 9.7 A3.5 3.5 0 1 0 14.7 14.3" fill="none" stroke="#22414f" stroke-width="1.6"/><rect x="15.6" y="16.4" width="6.2" height="5.4" fill="#aab3ba"/><path d="M17 16.4 V15 A1.7 1.7 0 0 1 20.4 15 V16.4" fill="none" stroke="#aab3ba" stroke-width="1.2"/></svg>
<span id="t78" style="left:1024.5px;top:64.13px;font-size:15.5px;line-height:23px;color:#bbbbbb;letter-spacing:0.521px;">AbstractApplicationContext.java</span>
<svg style="left:1267.8px;top:69px;" width="12" height="12" viewBox="0 0 12 12"><path d="M1.5 1.5 L10.5 10.5 M10.5 1.5 L1.5 10.5" stroke="#747779" stroke-width="1.1" fill="none"/></svg>
<svg style="left:1295.5px;top:64px;" width="24" height="24" viewBox="0 0 24 24"><circle cx="12" cy="12" r="9.0" fill="#3e8fae"/><path d="M14.7 9.7 A3.5 3.5 0 1 0 14.7 14.3" fill="none" stroke="#22414f" stroke-width="1.6"/><rect x="15.6" y="16.4" width="6.2" height="5.4" fill="#aab3ba"/><path d="M17 16.4 V15 A1.7 1.7 0 0 1 20.4 15 V16.4" fill="none" stroke="#aab3ba" stroke-width="1.2"/></svg>
<span id="t79" style="left:1323px;top:64.13px;font-size:15.5px;line-height:23px;color:#bbbbbb;letter-spacing:0.219px;">DefaultListableBeanFactory.java</span>
<svg style="left:1560px;top:69px;" width="12" height="12" viewBox="0 0 12 12"><path d="M1.5 1.5 L10.5 10.5 M10.5 1.5 L1.5 10.5" stroke="#747779" stroke-width="1.1" fill="none"/></svg>
<svg style="left:1588px;top:64px;" width="24" height="24" viewBox="0 0 24 24"><circle cx="12" cy="12" r="9" fill="#879199" opacity="0.85"/><rect x="5.7" y="2.5" width="12.6" height="19" fill="#3c3f41" opacity="0.8"/><path d="M7 4.6 C8.7 2.7 15.3 2.7 17 4.6 V19.4 C15.3 21.3 8.7 21.3 7 19.4Z" fill="#3e8fae"/><path d="M14.7 9.7 A3.5 3.5 0 1 0 14.7 14.3" fill="none" stroke="#22414f" stroke-width="1.6"/><rect x="15.6" y="16.4" width="6.2" height="5.4" fill="#aab3ba"/><path d="M17 16.4 V15 A1.7 1.7 0 0 1 20.4 15 V16.4" fill="none" stroke="#aab3ba" stroke-width="1.2"/></svg>
<span id="t80" style="left:1615.5px;top:64.13px;font-size:15.5px;line-height:23px;color:#bbbbbb;letter-spacing:0.236px;">AbstractBeanFactory.java</span>
<svg style="left:1806.5px;top:69px;" width="12" height="12" viewBox="0 0 12 12"><path d="M1.5 1.5 L10.5 10.5 M10.5 1.5 L1.5 10.5" stroke="#747779" stroke-width="1.1" fill="none"/></svg>
<svg style="left:1833.5px;top:64px;" width="24" height="24" viewBox="0 0 24 24"><circle cx="12" cy="12" r="9.0" fill="#3e8fae"/><path d="M14.7 9.7 A3.5 3.5 0 1 0 14.7 14.3" fill="none" stroke="#22414f" stroke-width="1.6"/><rect x="15.6" y="16.4" width="6.2" height="5.4" fill="#aab3ba"/><path d="M17 16.4 V15 A1.7 1.7 0 0 1 20.4 15 V16.4" fill="none" stroke="#aab3ba" stroke-width="1.2"/></svg>
<div style="left:1859px;top:58px;width:35px;height:33px;background:#3c3f41;"></div>
<svg style="left:1868px;top:69px;" width="16" height="12" viewBox="0 0 16 12"><path d="M2 2.5 L8 8.5 L14 2.5" fill="none" stroke="#c3c6c8" stroke-width="1.8"/></svg>
<div style="left:479px;top:91px;width:1415px;height:594px;background:#2b2b2b;"></div>
<div style="left:479px;top:91px;width:103px;height:594px;background:#313335;"></div>
<div style="left:582px;top:92px;width:1px;height:593px;background:#555555;"></div>
<div style="left:583px;top:328px;width:1311px;height:27px;background:#323232;"></div>
<div style="left:581px;top:276px;width:1313px;height:26px;background:#2d6099;"></div>
<div style="left:1790px;top:92px;width:1px;height:593px;background:#3e3e3e;"></div>
<div style="left:1790px;top:276px;width:1px;height:26px;background:#4a75a5;"></div>
<div style="left:633px;top:276px;width:1px;height:26px;background:#3f5878;"></div>
<div style="left:633px;top:407.6px;width:1px;height:26.25px;background:#393939;"></div>
<div style="left:633px;top:538.85px;width:1px;height:26.25px;background:#393939;"></div>
<span id="t81" class="m" style="left:494.3px;top:92.97px;font-size:17px;line-height:26px;color:#606366;letter-spacing:-1.602px;">188</span>
<span id="t82" class="m" style="left:494.3px;top:119.22px;font-size:17px;line-height:26px;color:#606366;letter-spacing:-1.602px;">189</span>
<span id="t83" class="m" style="left:494.3px;top:145.47px;font-size:17px;line-height:26px;color:#606366;letter-spacing:-1.602px;">190</span>
<span id="t84" class="m" style="left:494.3px;top:171.72px;font-size:17px;line-height:26px;color:#606366;letter-spacing:-1.602px;">191</span>
<span id="t85" class="m" style="left:494.3px;top:197.97px;font-size:17px;line-height:26px;color:#606366;letter-spacing:-1.602px;">192</span>
<span id="t86" class="m" style="left:494.3px;top:224.22px;font-size:17px;line-height:26px;color:#606366;letter-spacing:-1.602px;">193</span>
<span id="t87" class="m" style="left:494.3px;top:250.47px;font-size:17px;line-height:26px;color:#606366;letter-spacing:-1.602px;">194</span>
<span id="t88" class="m" style="left:494.3px;top:276.72px;font-size:17px;line-height:26px;color:#606366;letter-spacing:-1.602px;">195</span>
<span id="t89" class="m" style="left:494.3px;top:302.97px;font-size:17px;line-height:26px;color:#606366;letter-spacing:-1.602px;">196</span>
<span id="t90" class="m" style="left:494.3px;top:329.22px;font-size:17px;line-height:26px;color:#a4a3a3;letter-spacing:-1.602px;">197</span>
<span id="t91" class="m" style="left:494.3px;top:355.47px;font-size:17px;line-height:26px;color:#606366;letter-spacing:-1.602px;">198</span>
<span id="t92" class="m" style="left:494.3px;top:381.72px;font-size:17px;line-height:26px;color:#606366;letter-spacing:-1.602px;">199</span>
<span id="t93" class="m" style="left:494.3px;top:407.97px;font-size:17px;line-height:26px;color:#606366;letter-spacing:-1.602px;">200</span>
<span id="t94" class="m" style="left:494.3px;top:434.22px;font-size:17px;line-height:26px;color:#606366;letter-spacing:-1.602px;">201</span>
<span id="t95" class="m" style="left:494.3px;top:460.47px;font-size:17px;line-height:26px;color:#606366;letter-spacing:-1.602px;">202</span>
<span id="t96" class="m" style="left:494.3px;top:486.72px;font-size:17px;line-height:26px;color:#606366;letter-spacing:-1.602px;">203</span>
<span id="t97" class="m" style="left:494.3px;top:512.97px;font-size:17px;line-height:26px;color:#606366;letter-spacing:-1.602px;">204</span>
<span id="t98" class="m" style="left:494.3px;top:539.22px;font-size:17px;line-height:26px;color:#606366;letter-spacing:-1.602px;">205</span>
<span id="t99" class="m" style="left:494.3px;top:565.47px;font-size:17px;line-height:26px;color:#606366;letter-spacing:-1.602px;">206</span>
<span id="t100" class="m" style="left:494.3px;top:591.72px;font-size:17px;line-height:26px;color:#606366;letter-spacing:-1.602px;">207</span>
<span id="t101" class="m" style="left:494.3px;top:617.97px;font-size:17px;line-height:26px;color:#606366;letter-spacing:-1.602px;">208</span>
<span id="t102" class="m" style="left:494.3px;top:644.22px;font-size:17px;line-height:26px;color:#606366;letter-spacing:-1.602px;">209</span>
<span id="t103" class="m" style="left:494.3px;top:670.47px;font-size:17px;line-height:26px;color:#606366;letter-spacing:-1.602px;">210</span>
<svg style="left:576.1px;top:126.05000000000001px;" width="13" height="16" viewBox="0 0 13 16"><path d="M1 1 H11.6 V9.4 L6.3 14 L1 9.4 Z" fill="#2b2b2b" stroke="#585a5d" stroke-width="1.2"/><path d="M3.7 5.7 H8.9" stroke="#585a5d" stroke-width="1.2"/></svg>
<svg style="left:576.1px;top:175.85000000000002px;" width="13" height="16" viewBox="0 0 13 16"><path d="M1 14.2 H11.6 V5.8 L6.3 1 L1 5.8 Z" fill="#2b2b2b" stroke="#585a5d" stroke-width="1.2"/><path d="M3.7 8.8 H8.9" stroke="#585a5d" stroke-width="1.2"/></svg>
<svg style="left:576.1px;top:257.30000000000007px;" width="13" height="16" viewBox="0 0 13 16"><path d="M1 1 H11.6 V9.4 L6.3 14 L1 9.4 Z" fill="#2b2b2b" stroke="#585a5d" stroke-width="1.2"/><path d="M3.7 5.7 H8.9" stroke="#585a5d" stroke-width="1.2"/></svg>
<svg style="left:576.1px;top:307.1px;" width="13" height="16" viewBox="0 0 13 16"><path d="M1 14.2 H11.6 V5.8 L6.3 1 L1 5.8 Z" fill="#2b2b2b" stroke="#585a5d" stroke-width="1.2"/><path d="M3.7 8.8 H8.9" stroke="#585a5d" stroke-width="1.2"/></svg>
<svg style="left:576.1px;top:388.55000000000007px;" width="13" height="16" viewBox="0 0 13 16"><path d="M1 1 H11.6 V9.4 L6.3 14 L1 9.4 Z" fill="#2b2b2b" stroke="#585a5d" stroke-width="1.2"/><path d="M3.7 5.7 H8.9" stroke="#585a5d" stroke-width="1.2"/></svg>
<svg style="left:576.1px;top:438.35px;" width="13" height="16" viewBox="0 0 13 16"><path d="M1 14.2 H11.6 V5.8 L6.3 1 L1 5.8 Z" fill="#2b2b2b" stroke="#585a5d" stroke-width="1.2"/><path d="M3.7 8.8 H8.9" stroke="#585a5d" stroke-width="1.2"/></svg>
<svg style="left:576.1px;top:519.8000000000001px;" width="13" height="16" viewBox="0 0 13 16"><path d="M1 1 H11.6 V9.4 L6.3 14 L1 9.4 Z" fill="#2b2b2b" stroke="#585a5d" stroke-width="1.2"/><path d="M3.7 5.7 H8.9" stroke="#585a5d" stroke-width="1.2"/></svg>
<svg style="left:576.1px;top:569.6px;" width="13" height="16" viewBox="0 0 13 16"><path d="M1 14.2 H11.6 V5.8 L6.3 1 L1 5.8 Z" fill="#2b2b2b" stroke="#585a5d" stroke-width="1.2"/><path d="M3.7 8.8 H8.9" stroke="#585a5d" stroke-width="1.2"/></svg>
<svg style="left:576.1px;top:624.8000000000001px;" width="13" height="16" viewBox="0 0 13 16"><path d="M1 1 H11.6 V9.4 L6.3 14 L1 9.4 Z" fill="#2b2b2b" stroke="#585a5d" stroke-width="1.2"/><path d="M3.7 5.7 H8.9" stroke="#585a5d" stroke-width="1.2"/></svg>
<svg style="left:529px;top:254.3px;" width="18" height="16" viewBox="0 0 18 16"><circle cx="6" cy="8" r="5.1" fill="#4f9a46"/><path d="M4.9 5.9 H7.1 M4.9 10.1 H7.1 M6 5.9 V10.1" stroke="#234a20" stroke-width="1.2" fill="none"/><path d="M13 0.7 L16 4.7 H14 V13.4 H12 V4.7 H10Z" fill="#c75a5a"/></svg>
<svg style="left:529px;top:385.55px;" width="18" height="16" viewBox="0 0 18 16"><circle cx="6" cy="8" r="5.1" fill="#4f9a46"/><path d="M4.9 5.9 H7.1 M4.9 10.1 H7.1 M6 5.9 V10.1" stroke="#234a20" stroke-width="1.2" fill="none"/><path d="M13 0.7 L16 4.7 H14 V13.4 H12 V4.7 H10Z" fill="#c75a5a"/></svg>
<svg style="left:529px;top:516.8000000000001px;" width="18" height="16" viewBox="0 0 18 16"><circle cx="6" cy="8" r="5.1" fill="#4f9a46"/><path d="M4.9 5.9 H7.1 M4.9 10.1 H7.1 M6 5.9 V10.1" stroke="#234a20" stroke-width="1.2" fill="none"/><path d="M13 0.7 L16 4.7 H14 V13.4 H12 V4.7 H10Z" fill="#c75a5a"/></svg>
<svg style="left:548px;top:624.6px;" width="16" height="13" viewBox="0 0 16 13"><path d="M1.6 0.5 V12.5" stroke="#6e7174" stroke-width="1.5"/><path d="M5 2 H15 M5 6.5 H15 M5 11 H11" stroke="#6e7174" stroke-width="1.5"/></svg>
<span id="t104" class="m" style="left:630.0px;top:119.06px;font-size:17.6px;line-height:26px;color:#808080;letter-spacing:-0.562px;">//---------------------------------------------------------------------</span>
<span id="t105" class="m" style="left:630.0px;top:145.31px;font-size:17.6px;line-height:26px;color:#808080;letter-spacing:-0.562px;">// Implementation of BeanFactory interface</span>
<span id="t106" class="m" style="left:630.0px;top:171.56px;font-size:17.6px;line-height:26px;color:#808080;letter-spacing:-0.562px;">//---------------------------------------------------------------------</span>
<span id="t107" class="m" style="left:630.0px;top:224.06px;font-size:17.6px;line-height:26px;color:#bbb529;letter-spacing:-0.562px;">@Override</span>
<span id="t108" class="m" style="left:630.0px;top:355.31px;font-size:17.6px;line-height:26px;color:#bbb529;letter-spacing:-0.562px;">@Override</span>
<span id="t109" class="m" style="left:630.0px;top:486.56px;font-size:17.6px;line-height:26px;color:#bbb529;letter-spacing:-0.562px;">@Override</span>
<span id="t110" class="m" style="left:630.0px;top:250.31px;font-size:17.6px;line-height:26px;color:#cc7832;letter-spacing:-0.562px;">public </span>
<span id="t111" class="m" style="left:700.0px;top:250.31px;font-size:17.6px;line-height:26px;color:#a9b7c6;letter-spacing:-0.562px;">Object </span>
<span id="t112" class="m" style="left:770.0px;top:250.31px;font-size:17.6px;line-height:26px;color:#ffc66d;letter-spacing:-0.562px;">getBean</span>
<span id="t113" class="m" style="left:840.0px;top:250.31px;font-size:17.6px;line-height:26px;color:#a9b7c6;letter-spacing:-0.562px;">(String name) </span>
<span id="t114" class="m" style="left:980.0px;top:250.31px;font-size:17.6px;line-height:26px;color:#cc7832;letter-spacing:-0.562px;">throws </span>
<span id="t115" class="m" style="left:1050.0px;top:250.31px;font-size:17.6px;line-height:26px;color:#a9b7c6;letter-spacing:-0.562px;">BeansException {</span>
<span id="t116" class="m" style="left:1230.0px;top:250.31px;font-size:17.6px;line-height:26px;color:#787878;font-style:italic;letter-spacing:-0.562px;">name: "person01"</span>
<span id="t117" class="m" style="left:670.0px;top:276.56px;font-size:17.6px;line-height:26px;color:#cc7832;letter-spacing:-0.562px;">return </span>
<span id="t118" class="m" style="left:740.0px;top:276.56px;font-size:17.6px;line-height:26px;color:#a9b7c6;letter-spacing:-0.562px;">doGetBean(name</span>
<span id="t119" class="m" style="left:880.0px;top:276.56px;font-size:17.6px;line-height:26px;color:#cc7832;letter-spacing:-0.562px;">,</span>
<div style="left:902.5px;top:278.55px;width:114.5px;height:20.6px;background:#3a5f8b;border-radius:4px"></div>
<span id="t120" style="left:909.1px;top:277.65px;font-size:15px;line-height:22px;color:#8499b3;letter-spacing:0.720px;">requiredType:</span>
<span id="t121" class="m" style="left:1020.5px;top:276.56px;font-size:17.6px;line-height:26px;color:#cc7832;letter-spacing:-0.562px;">null,</span>
<div style="left:1082.5px;top:278.55px;width:47.0px;height:20.6px;background:#3a5f8b;border-radius:4px"></div>
<span id="t122" style="left:1089.1px;top:277.65px;font-size:15px;line-height:22px;color:#8499b3;letter-spacing:0.048px;">args:</span>
<span id="t123" class="m" style="left:1133px;top:276.56px;font-size:17.6px;line-height:26px;color:#cc7832;letter-spacing:-0.562px;">null,</span>
<div style="left:1194.5px;top:278.55px;width:126.0px;height:20.6px;background:#3a5f8b;border-radius:4px"></div>
<span id="t124" style="left:1201.1px;top:277.65px;font-size:15px;line-height:22px;color:#8499b3;letter-spacing:0.479px;">typeCheckOnly:</span>
<span id="t125" class="m" style="left:1324.3px;top:276.56px;font-size:17.6px;line-height:26px;color:#cc7832;letter-spacing:-0.562px;">false</span>
<span id="t126" class="m" style="left:1374.3px;top:276.56px;font-size:17.6px;line-height:26px;color:#a9b7c6;letter-spacing:-0.562px;">)</span>
<span id="t127" class="m" style="left:1384.3px;top:276.56px;font-size:17.6px;line-height:26px;color:#cc7832;letter-spacing:-0.562px;">;</span>
<span id="t128" class="m" style="left:1414px;top:276.56px;font-size:17.6px;line-height:26px;color:#a9b9cc;font-style:italic;letter-spacing:-0.562px;">name: "person01"</span>
<span id="t129" class="m" style="left:630.0px;top:302.81px;font-size:17.6px;line-height:26px;color:#a9b7c6;letter-spacing:-0.562px;">}</span>
<span id="t130" class="m" style="left:630.0px;top:381.56px;font-size:17.6px;line-height:26px;color:#cc7832;letter-spacing:-0.562px;">public </span>
<span id="t131" class="m" style="left:700.0px;top:381.56px;font-size:17.6px;line-height:26px;color:#a9b7c6;letter-spacing:-0.562px;">&lt;</span>
<span id="t132" class="m" style="left:710.0px;top:381.56px;font-size:17.6px;line-height:26px;color:#507874;letter-spacing:-0.562px;">T</span>
<span id="t133" class="m" style="left:720.0px;top:381.56px;font-size:17.6px;line-height:26px;color:#a9b7c6;letter-spacing:-0.562px;">&gt; </span>
<span id="t134" class="m" style="left:740.0px;top:381.56px;font-size:17.6px;line-height:26px;color:#507874;letter-spacing:-0.562px;">T </span>
<span id="t135" class="m" style="left:760.0px;top:381.56px;font-size:17.6px;line-height:26px;color:#ffc66d;letter-spacing:-0.562px;">getBean</span>
<span id="t136" class="m" style="left:830.0px;top:381.56px;font-size:17.6px;line-height:26px;color:#a9b7c6;letter-spacing:-0.562px;">(String name</span>
<span id="t137" class="m" style="left:950.0px;top:381.56px;font-size:17.6px;line-height:26px;color:#cc7832;letter-spacing:-0.562px;">, </span>
<span id="t138" class="m" style="left:970.0px;top:381.56px;font-size:17.6px;line-height:26px;color:#a9b7c6;letter-spacing:-0.562px;">Class&lt;</span>
<span id="t139" class="m" style="left:1030.0px;top:381.56px;font-size:17.6px;line-height:26px;color:#507874;letter-spacing:-0.562px;">T</span>
<span id="t140" class="m" style="left:1040.0px;top:381.56px;font-size:17.6px;line-height:26px;color:#a9b7c6;letter-spacing:-0.562px;">&gt; requiredType) </span>
<span id="t141" class="m" style="left:1200.0px;top:381.56px;font-size:17.6px;line-height:26px;color:#cc7832;letter-spacing:-0.562px;">throws </span>
<span id="t142" class="m" style="left:1270.0px;top:381.56px;font-size:17.6px;line-height:26px;color:#a9b7c6;letter-spacing:-0.562px;">BeansException {</span>
<span id="t143" class="m" style="left:670.0px;top:407.81px;font-size:17.6px;line-height:26px;color:#cc7832;letter-spacing:-0.562px;">return </span>
<span id="t144" class="m" style="left:740.0px;top:407.81px;font-size:17.6px;line-height:26px;color:#a9b7c6;letter-spacing:-0.562px;">doGetBean(name</span>
<span id="t145" class="m" style="left:880.0px;top:407.81px;font-size:17.6px;line-height:26px;color:#cc7832;letter-spacing:-0.562px;">, </span>
<span id="t146" class="m" style="left:900.0px;top:407.81px;font-size:17.6px;line-height:26px;color:#a9b7c6;letter-spacing:-0.562px;">requiredType</span>
<span id="t147" class="m" style="left:1020.0px;top:407.81px;font-size:17.6px;line-height:26px;color:#cc7832;letter-spacing:-0.562px;">,</span>
<div style="left:1042.5px;top:409.80px;width:47.0px;height:20.6px;background:#363636;border-radius:4px"></div>
<span id="t148" style="left:1049.1px;top:408.90px;font-size:15px;line-height:22px;color:#7b8085;letter-spacing:0.048px;">args:</span>
<span id="t149" class="m" style="left:1093px;top:407.81px;font-size:17.6px;line-height:26px;color:#cc7832;letter-spacing:-0.562px;">null,</span>
<div style="left:1154.5px;top:409.80px;width:126.0px;height:20.6px;background:#363636;border-radius:4px"></div>
<span id="t150" style="left:1161.1px;top:408.90px;font-size:15px;line-height:22px;color:#7b8085;letter-spacing:0.479px;">typeCheckOnly:</span>
<span id="t151" class="m" style="left:1284.3px;top:407.81px;font-size:17.6px;line-height:26px;color:#cc7832;letter-spacing:-0.562px;">false</span>
<span id="t152" class="m" style="left:1334.3px;top:407.81px;font-size:17.6px;line-height:26px;color:#a9b7c6;letter-spacing:-0.562px;">)</span>
<span id="t153" class="m" style="left:1344.3px;top:407.81px;font-size:17.6px;line-height:26px;color:#cc7832;letter-spacing:-0.562px;">;</span>
<span id="t154" class="m" style="left:630.0px;top:434.06px;font-size:17.6px;line-height:26px;color:#a9b7c6;letter-spacing:-0.562px;">}</span>
<span id="t155" class="m" style="left:630.0px;top:512.81px;font-size:17.6px;line-height:26px;color:#cc7832;letter-spacing:-0.562px;">public </span>
<span id="t156" class="m" style="left:700.0px;top:512.81px;font-size:17.6px;line-height:26px;color:#a9b7c6;letter-spacing:-0.562px;">Object </span>
<span id="t157" class="m" style="left:770.0px;top:512.81px;font-size:17.6px;line-height:26px;color:#ffc66d;letter-spacing:-0.562px;">getBean</span>
<span id="t158" class="m" style="left:840.0px;top:512.81px;font-size:17.6px;line-height:26px;color:#a9b7c6;letter-spacing:-0.562px;">(String name</span>
<span id="t159" class="m" style="left:960.0px;top:512.81px;font-size:17.6px;line-height:26px;color:#cc7832;letter-spacing:-0.562px;">, </span>
<span id="t160" class="m" style="left:980.0px;top:512.81px;font-size:17.6px;line-height:26px;color:#a9b7c6;letter-spacing:-0.562px;">Object... args) </span>
<span id="t161" class="m" style="left:1140.0px;top:512.81px;font-size:17.6px;line-height:26px;color:#cc7832;letter-spacing:-0.562px;">throws </span>
<span id="t162" class="m" style="left:1210.0px;top:512.81px;font-size:17.6px;line-height:26px;color:#a9b7c6;letter-spacing:-0.562px;">BeansException {</span>
<span id="t163" class="m" style="left:670.0px;top:539.06px;font-size:17.6px;line-height:26px;color:#cc7832;letter-spacing:-0.562px;">return </span>
<span id="t164" class="m" style="left:740.0px;top:539.06px;font-size:17.6px;line-height:26px;color:#a9b7c6;letter-spacing:-0.562px;">doGetBean(name</span>
<span id="t165" class="m" style="left:880.0px;top:539.06px;font-size:17.6px;line-height:26px;color:#cc7832;letter-spacing:-0.562px;">,</span>
<div style="left:902.5px;top:541.05px;width:114.5px;height:20.6px;background:#363636;border-radius:4px"></div>
<span id="t166" style="left:909.1px;top:540.15px;font-size:15px;line-height:22px;color:#7b8085;letter-spacing:0.720px;">requiredType:</span>
<span id="t167" class="m" style="left:1020.5px;top:539.06px;font-size:17.6px;line-height:26px;color:#cc7832;letter-spacing:-0.562px;">null</span>
<span id="t168" class="m" style="left:1060.5px;top:539.06px;font-size:17.6px;line-height:26px;color:#cc7832;letter-spacing:-0.562px;">, </span>
<span id="t169" class="m" style="left:1080.5px;top:539.06px;font-size:17.6px;line-height:26px;color:#a9b7c6;letter-spacing:-0.562px;">args</span>
<span id="t170" class="m" style="left:1120.5px;top:539.06px;font-size:17.6px;line-height:26px;color:#cc7832;letter-spacing:-0.562px;">,</span>
<div style="left:1141.5px;top:541.05px;width:126.0px;height:20.6px;background:#363636;border-radius:4px"></div>
<span id="t171" style="left:1148.1px;top:540.15px;font-size:15px;line-height:22px;color:#7b8085;letter-spacing:0.479px;">typeCheckOnly:</span>
<span id="t172" class="m" style="left:1271.3px;top:539.06px;font-size:17.6px;line-height:26px;color:#cc7832;letter-spacing:-0.562px;">false</span>
<span id="t173" class="m" style="left:1321.3px;top:539.06px;font-size:17.6px;line-height:26px;color:#a9b7c6;letter-spacing:-0.562px;">)</span>
<span id="t174" class="m" style="left:1331.3px;top:539.06px;font-size:17.6px;line-height:26px;color:#cc7832;letter-spacing:-0.562px;">;</span>
<span id="t175" class="m" style="left:630.0px;top:565.31px;font-size:17.6px;line-height:26px;color:#a9b7c6;letter-spacing:-0.562px;">}</span>
<span id="t176" class="m" style="left:630.0px;top:617.81px;font-size:17.6px;line-height:26px;color:#629755;font-style:italic;letter-spacing:-0.562px;">/**</span>
<span id="t177" class="m" style="left:630.0px;top:644.06px;font-size:17.6px;line-height:26px;color:#629755;font-style:italic;letter-spacing:-0.562px;"> * Return an instance, which may be shared or independent, of the specified bean.</span>
<span id="t178" class="m" style="left:630.0px;top:670.31px;font-size:17.6px;line-height:26px;color:#629755;font-style:italic;letter-spacing:-0.562px;"> * </span>
<span id="t179" class="m" style="left:660.0px;top:670.31px;font-size:17.6px;line-height:26px;color:#629755;font-weight:bold;font-style:italic;letter-spacing:-0.562px;">@param </span>
<span id="t180" class="m" style="left:730.0px;top:670.31px;font-size:17.6px;line-height:26px;color:#8a653b;font-style:italic;letter-spacing:-0.562px;">name </span>
<span id="t181" class="m" style="left:780.0px;top:670.31px;font-size:17.6px;line-height:26px;color:#629755;font-style:italic;letter-spacing:-0.562px;">the name of the bean to retrieve</span>
<div style="left:591px;top:673px;width:1160px;height:10.5px;background:rgba(120,120,120,0.45);"></div>
<div style="left:1882px;top:155px;width:10px;height:42px;background:rgba(128,128,128,0.42);"></div>
<svg style="left:1876px;top:94px;" width="16" height="13" viewBox="0 0 16 13"><path d="M1.6 6.6 L6 10.6 L14.2 1.8" fill="none" stroke="#4ea64a" stroke-width="2.8"/></svg>
<div style="left:1894px;top:58px;width:24px;height:728px;background:#3c3f41;"></div>
<div style="left:1893.5px;top:58px;width:1px;height:728px;background:#323537;"></div>
<span id="t182" style="left:1898.5px;top:63.42px;font-size:19px;line-height:28px;color:#c3c6c8;font-weight:bold;font-style:italic;">m</span>
<span id="t183" style="left:1916px;top:93px;transform-origin:0 0;transform:rotate(90deg);font-size:13.5px;line-height:20px;color:#bbbbbb;letter-spacing:0.094px;">Maven</span>
<svg style="left:1900px;top:159px;" width="17" height="17" viewBox="0 0 17 17"><ellipse cx="8.5" cy="4" rx="7.5" ry="2.9" fill="#afb1b3"/><path d="M1 6.4 C3 9.4 14 9.4 16 6.4 V9 C14 12 3 12 1 9Z M1 10.8 C3 13.8 14 13.8 16 10.8 V13.4 C14 16.4 3 16.4 1 13.4Z" fill="#afb1b3"/></svg>
<span id="t184" style="left:1916px;top:181.5px;transform-origin:0 0;transform:rotate(90deg);font-size:13.5px;line-height:20px;color:#bbbbbb;letter-spacing:-0.287px;">Database</span>
<div style="left:1906px;top:189px;width:12.5px;height:73.6px;border-radius:4px;background:#1d1e1f;border:1px solid #8c8f91;box-sizing:border-box"></div>
<div style="left:1908.4px;top:199.6px;width:7.6px;height:60px;background:repeating-linear-gradient(180deg,#f7a021 0,#f7a021 1.9px,#5a3a10 1.9px,#5a3a10 2.8px)"></div>
<svg style="left:1899px;top:264px;" width="18" height="16" viewBox="0 0 18 16"><path d="M9 2 C11 2 11.4 5 9 5.4 C6.6 5 7 2 9 2Z M9 5.4 C11.4 5.4 11.6 8.2 9 8.6 C6.4 8.2 6.6 5.4 9 5.4Z M9 8.6 C12.4 9 12.2 14.6 9 15 C5.8 14.6 5.6 9 9 8.6Z" fill="#afb1b3"/><path d="M7.4 4 L2.5 1.2 M10.6 4 L15.5 1.2 M7 7 L1.6 6.4 M11 7 L16.4 6.4 M7.2 8.2 L2.4 12.6 M10.8 8.2 L15.6 12.6" stroke="#afb1b3" stroke-width="1.1" fill="none"/></svg>
<span id="t185" style="left:1916px;top:286px;transform-origin:0 0;transform:rotate(90deg);font-size:13.5px;line-height:20px;color:#bbbbbb;letter-spacing:0.411px;">Ant</span>
<div style="left:27px;top:685px;width:1867px;height:101px;background:#3c3f41;"></div>
<div style="left:27px;top:685px;width:1867px;height:1px;background:#323537;"></div>
<div style="left:27px;top:719px;width:1867px;height:1px;background:#323537;"></div>
<span id="t186" style="left:35px;top:692.13px;font-size:15.5px;line-height:23px;color:#bbbbbb;letter-spacing:0.386px;">Debug:</span>
<svg style="left:111px;top:692px;" width="22" height="22" viewBox="0 0 22 22"><rect x="4.5" y="1.5" width="14" height="10" fill="none" stroke="#6e7275" stroke-width="1.2"/><rect x="2" y="4.5" width="15" height="11" fill="#3c3f41" stroke="#9a9da0" stroke-width="1.4"/><rect x="4" y="6.5" width="11" height="7" fill="#3a7a99"/><circle cx="17.6" cy="17.6" r="2.6" fill="#2de02d"/></svg>
<span id="t187" style="left:136px;top:692.13px;font-size:15.5px;line-height:23px;color:#bbbbbb;letter-spacing:0.375px;">SourceTest</span>
<svg style="left:226.8px;top:697.5px;" width="12" height="12" viewBox="0 0 12 12"><path d="M1.5 1.5 L10.5 10.5 M10.5 1.5 L1.5 10.5" stroke="#747779" stroke-width="1.1" fill="none"/></svg>
<div style="left:96.7px;top:716px;width:154px;height:3.5px;background:#74787d;"></div>
<div style="left:62.5px;top:720px;width:1px;height:66px;background:#323537;"></div>
<svg style="left:35px;top:728px;" width="20" height="20" viewBox="0 0 20 20"><path d="M13.5 6.2 A6 6 0 1 0 15.4 13" fill="none" stroke="#57a64a" stroke-width="2.4"/><path d="M10.2 1.2 L17.4 6 L10.6 9.6Z" fill="#57a64a"/><rect x="12" y="12.4" width="6.4" height="6.4" fill="#afb1b3"/></svg>
<div style="left:33px;top:757px;width:23px;height:1px;background:#555759;"></div>
<svg style="left:38.6px;top:770.6px;" width="16" height="16" viewBox="0 0 16 16"><rect x="0.6" y="1.6" width="2.6" height="14" fill="#57a64a"/><path d="M5.4 1.6 L15.4 8.6 L5.4 15.6Z" fill="#57a64a"/></svg>
<div style="left:63px;top:753px;width:1831px;height:1px;background:#323537;"></div>
<span id="t188" style="left:80px;top:728.09px;font-size:13.6px;line-height:20px;color:#bbbbbb;letter-spacing:0.035px;">Debugger</span>
<div style="left:64px;top:752.3px;width:93px;height:2.5px;background:#74787d;"></div>
<svg style="left:172px;top:729px;" width="20" height="19" viewBox="0 0 20 19"><rect x="1" y="1.6" width="14.6" height="12" fill="#afb1b3"/><path d="M3.6 4.6 L7.4 7.6 L3.6 10.6 M8.6 10.8 H12.6" stroke="#3c3f41" stroke-width="1.5" fill="none"/><circle cx="13.6" cy="13.2" r="4.6" fill="#e6a23a"/><path d="M13.6 10.4 V15.6 M11.6 13.6 L13.6 15.8 L15.6 13.6" stroke="#3c3f41" stroke-width="1.1" fill="none"/></svg>
<span id="t189" style="left:196px;top:728.09px;font-size:13.6px;line-height:20px;color:#bbbbbb;letter-spacing:-0.225px;">Console</span>
<svg style="left:264px;top:729px;" width="18" height="16" viewBox="0 0 18 16"><rect x="1" y="0.8" width="15.8" height="1.8" fill="#b4b6b8"/><rect x="1" y="5.2" width="15.8" height="4.4" fill="#4a9fd8"/><rect x="1" y="12.2" width="15.8" height="2.1" fill="#b4b6b8"/></svg>
<div style="left:293px;top:725px;width:1px;height:24px;background:#555759;"></div>
<svg style="left:304px;top:726px;" width="20" height="20" viewBox="0 0 20 20"><path d="M2 9.8 L9.4 3 L15 9" fill="none" stroke="#4a9fd8" stroke-width="2.3"/><path d="M17.8 6.4 V13 H10.2Z" fill="#4a9fd8"/><rect x="2" y="15.2" width="15.8" height="2.4" fill="#b4b6b8"/></svg>
<svg style="left:337px;top:726px;" width="18" height="20" viewBox="0 0 18 20"><rect x="7.6" y="1.3" width="2.6" height="8" fill="#4a9fd8"/><path d="M3.2 7.4 H14.8 L9 13.2Z" fill="#4a9fd8"/><rect x="1.2" y="15.2" width="15.6" height="2.4" fill="#b4b6b8"/></svg>
<svg style="left:370px;top:726px;" width="18" height="20" viewBox="0 0 18 20"><rect x="7.5" y="1.3" width="2.6" height="8" fill="#db5860"/><path d="M3.1 7.4 H14.7 L8.9 13.2Z" fill="#db5860"/><rect x="1" y="15.2" width="15.6" height="2.4" fill="#b4b6b8"/></svg>
<svg style="left:402px;top:726px;" width="18" height="20" viewBox="0 0 18 20"><rect x="7.6" y="6.4" width="2.6" height="7.4" fill="#4a9fd8"/><path d="M3.1 8.3 H14.7 L8.9 2Z" fill="#4a9fd8"/><rect x="1.1" y="15.2" width="15.7" height="2.4" fill="#b4b6b8"/></svg>
<svg style="left:434px;top:726px;" width="19" height="20" viewBox="0 0 19 20"><path d="M2.6 3.2 L9.4 10 M9.4 3.2 L2.6 10" stroke="#db5860" stroke-width="2.4"/><path d="M11 7.6 H16.6 V16.2 H7.6 V12.6" fill="none" stroke="#b4b6b8" stroke-width="2.4"/><path d="M4.2 13.4 H11 L7.6 9.2Z" fill="#b4b6b8"/></svg>
<svg style="left:466px;top:726px;" width="20" height="20" viewBox="0 0 20 20"><path d="M2.8 6.6 L9 10.6" stroke="#4a9fd8" stroke-width="2.6"/><path d="M12 5.4 V12.2 H5Z" fill="#4a9fd8"/><path d="M12.4 9 H18.8 M12.4 18.6 H18.8 M15.6 9 V18.6" stroke="#b4b6b8" stroke-width="1.3" fill="none"/></svg>
<div style="left:496px;top:728px;width:1px;height:20px;background:#555759;"></div>
<svg style="left:509px;top:727px;" width="18" height="18" viewBox="0 0 18 18"><rect x="2.4" y="2.4" width="13.2" height="13.2" fill="none" stroke="#c8cacc" stroke-width="2.2"/><rect x="1.3" y="1.3" width="15.4" height="4" fill="#c8cacc"/><path d="M2 9 H16 M2 12.4 H16 M6.6 6 V16 M11.4 6 V16" stroke="#c8cacc" stroke-width="1.3"/></svg>
<svg style="left:541px;top:732px;" width="18" height="12" viewBox="0 0 18 12"><path d="M1.6 2.6 H7 M1.6 6 H6 M1.6 9.6 H7 M11 2.6 H16.8 M12 6 H16.8 M11 9.6 H16.8 M12 1 L7 11" stroke="#5a5d60" stroke-width="1.5" fill="none"/></svg>
<svg style="left:1866px;top:729px;" width="23" height="19" viewBox="0 0 23 19"><rect x="1.5" y="1.5" width="8.4" height="5.8" fill="#c8cacc"/><rect x="11.2" y="1.5" width="5.4" height="5.8" fill="#c8cacc"/><rect x="1.5" y="8.6" width="15.1" height="4.4" fill="#c8cacc"/><path d="M13.6 14 H21 L17.3 17.8Z" fill="#c8cacc"/></svg>
<svg style="left:1834.3px;top:692px;" width="20" height="20" viewBox="0 0 20 20"><g transform="translate(10,10)"><rect x="-1.9" y="-8.5" width="3.8" height="4" fill="#c8cacc" transform="rotate(0)"/><rect x="-1.9" y="-8.5" width="3.8" height="4" fill="#c8cacc" transform="rotate(45)"/><rect x="-1.9" y="-8.5" width="3.8" height="4" fill="#c8cacc" transform="rotate(90)"/><rect x="-1.9" y="-8.5" width="3.8" height="4" fill="#c8cacc" transform="rotate(135)"/><rect x="-1.9" y="-8.5" width="3.8" height="4" fill="#c8cacc" transform="rotate(180)"/><rect x="-1.9" y="-8.5" width="3.8" height="4" fill="#c8cacc" transform="rotate(225)"/><rect x="-1.9" y="-8.5" width="3.8" height="4" fill="#c8cacc" transform="rotate(270)"/><rect x="-1.9" y="-8.5" width="3.8" height="4" fill="#c8cacc" transform="rotate(315)"/><circle r="4.5" fill="none" stroke="#c8cacc" stroke-width="3.8"/></g></svg>
<div style="left:1869.7px;top:701.5px;width:15px;height:2px;background:#c8cacc;"></div>
<span id="t190" style="left:80px;top:761.89px;font-size:13.6px;line-height:20px;color:#bbbbbb;letter-spacing:-0.346px;">Frames</span>
<span id="t191" style="left:156px;top:761.89px;font-size:13.6px;line-height:20px;color:#bbbbbb;letter-spacing:-0.268px;">Threads</span>
<div style="left:465.5px;top:755px;width:1px;height:31px;background:#323537;"></div>
<span id="t192" style="left:484px;top:761.89px;font-size:13.6px;line-height:20px;color:#bbbbbb;letter-spacing:-0.152px;">Variables</span>
<div style="left:1361px;top:755px;width:1px;height:31px;background:#323537;"></div>
<span id="t193" style="left:1379px;top:761.89px;font-size:13.6px;line-height:20px;color:#bbbbbb;letter-spacing:0.434px;">Memory</span>
<span id="t194" style="left:1463px;top:761.89px;font-size:13.6px;line-height:20px;color:#bbbbbb;letter-spacing:-0.050px;">Overhead</span>
<svg style="left:0;top:0" width="1918" height="786" viewBox="0 0 1918 786"><rect x="51.7" y="204.7" width="409.3" height="99.8" rx="3.8" fill="none" stroke="#f5241b" stroke-width="4"/><rect x="736.8" y="274" width="112.5" height="32.7" rx="3.8" fill="none" stroke="#f5241b" stroke-width="4"/><rect x="733.4" y="408" width="110.4" height="33.5" rx="3.8" fill="none" stroke="#f5241b" stroke-width="4.3"/><rect x="737.5" y="531.5" width="100.2" height="36.9" rx="3.8" fill="none" stroke="#f5241b" stroke-width="4.3"/><polygon points="485.8,265.9 707.2,274.4 707.3,270.8 723.6,281.6 706.8,288.5 706.9,284.9 485.8,267.1" fill="#f5241b"/><polygon points="474.9,283.3 721.7,400.5 723.6,397.0 732.8,408.9 715.2,412.9 717.1,409.4 474.3,284.3" fill="#f5241b"/><polygon points="478.8,327.1 708.6,535.4 712.7,532.2 719.0,548.6 697.4,544.0 701.5,540.8 478.0,327.9" fill="#f5241b"/><polygon points="942.0,431.6 1299.2,440.6 1298.1,435.8 1314.4,446.0 1297.0,454.4 1299.2,450.2 942.0,432.8" fill="#f5241b"/></svg>
<span id="t195" style="left:1344.5px;top:441.07px;font-size:33px;line-height:50px;color:#f5281b;letter-spacing:0.751px;">该4个bean都是调用的doGetBean()</span>
</body></html>
